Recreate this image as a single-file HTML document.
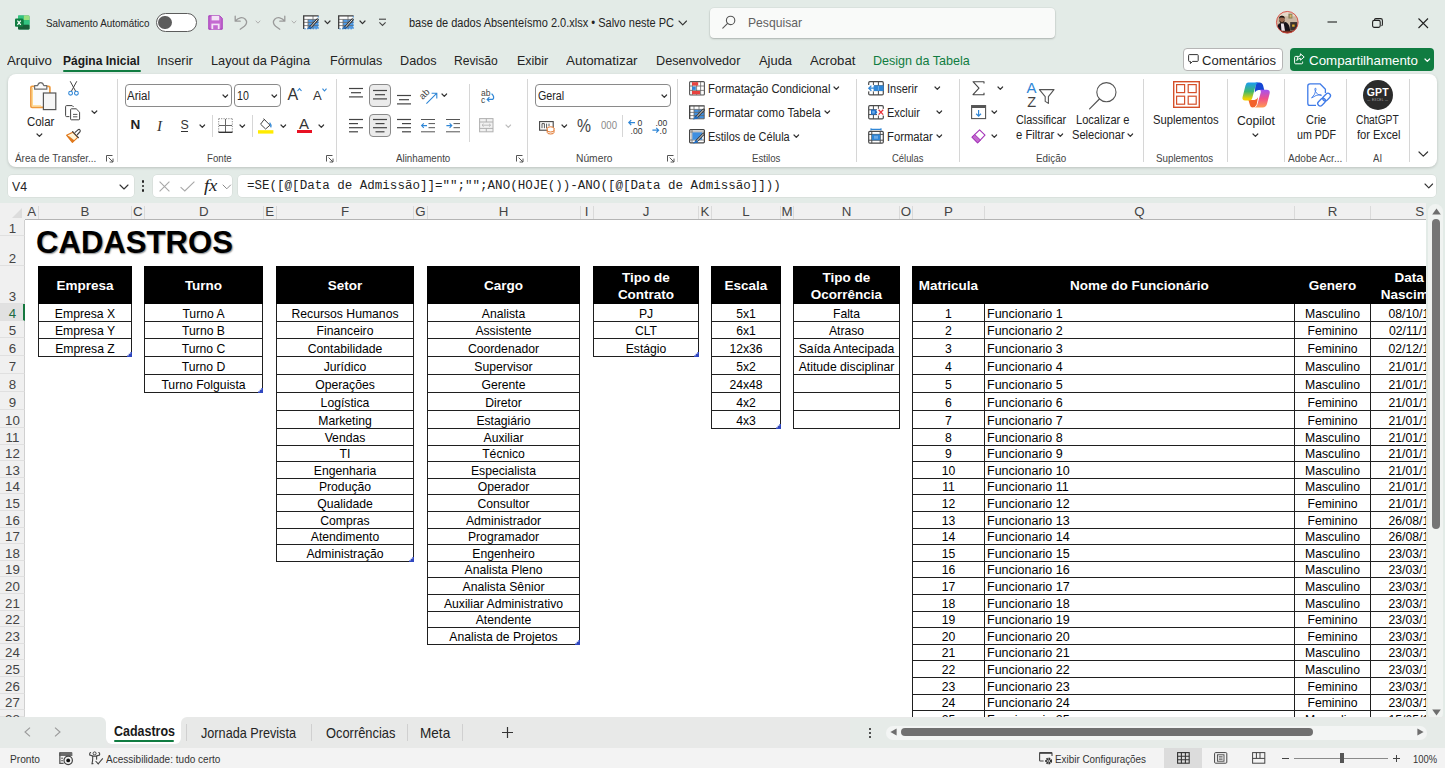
<!DOCTYPE html>
<html lang="pt-BR"><head><meta charset="utf-8"><title>base de dados Absenteísmo 2.0.xlsx - Excel</title>
<style>
html,body{margin:0;padding:0;}
body{width:1445px;height:768px;overflow:hidden;position:relative;background:#e3ebe7;font-family:"Liberation Sans",sans-serif;}
.b{position:absolute;box-sizing:border-box;}
.t{position:absolute;white-space:nowrap;}
svg{overflow:visible;}
.c{position:absolute;white-space:nowrap;font-size:12.2px;line-height:14px;color:#000;text-align:center;}
.h{position:absolute;white-space:nowrap;font-size:13.5px;line-height:17.5px;color:#fff;font-weight:bold;text-align:center;}
</style></head><body>
<div class="b" style="left:0px;top:204px;width:1426px;height:513px;background:#fff;"></div>
<div class="b" style="left:0px;top:203px;width:1426px;height:17px;background:#f0f0f0;"></div>
<div class="b" style="left:25px;top:219px;width:1401px;height:1px;background:#b4b4b4;"></div>
<div class="b" style="left:0px;top:220px;width:25px;height:497px;background:#f0f0f0;border-right:1px solid #d0d0d0;"></div>
<svg class="b" style="left:12px;top:208px;" width="10" height="10" viewBox="0 0 10 10"><path d="M10 0 L10 10 L0 10 Z" fill="#dcdcdc"/></svg>
<div class="b" style="left:38px;top:206px;width:1px;height:13px;background:#dadada;"></div>
<span class="t" style="left:21.7px;width:20px;text-align:center;top:203px;line-height:17px;font-size:13.3px;color:#444;">A</span>
<div class="b" style="left:131px;top:206px;width:1px;height:13px;background:#dadada;"></div>
<span class="t" style="left:74.9px;width:20px;text-align:center;top:203px;line-height:17px;font-size:13.3px;color:#444;">B</span>
<div class="b" style="left:144px;top:206px;width:1px;height:13px;background:#dadada;"></div>
<span class="t" style="left:127.9px;width:20px;text-align:center;top:203px;line-height:17px;font-size:13.3px;color:#444;">C</span>
<div class="b" style="left:263px;top:206px;width:1px;height:13px;background:#dadada;"></div>
<span class="t" style="left:193.7px;width:20px;text-align:center;top:203px;line-height:17px;font-size:13.3px;color:#444;">D</span>
<div class="b" style="left:276px;top:206px;width:1px;height:13px;background:#dadada;"></div>
<span class="t" style="left:259.8px;width:20px;text-align:center;top:203px;line-height:17px;font-size:13.3px;color:#444;">E</span>
<div class="b" style="left:413px;top:206px;width:1px;height:13px;background:#dadada;"></div>
<span class="t" style="left:335.1px;width:20px;text-align:center;top:203px;line-height:17px;font-size:13.3px;color:#444;">F</span>
<div class="b" style="left:427px;top:206px;width:1px;height:13px;background:#dadada;"></div>
<span class="t" style="left:410.3px;width:20px;text-align:center;top:203px;line-height:17px;font-size:13.3px;color:#444;">G</span>
<div class="b" style="left:580px;top:206px;width:1px;height:13px;background:#dadada;"></div>
<span class="t" style="left:493.5px;width:20px;text-align:center;top:203px;line-height:17px;font-size:13.3px;color:#444;">H</span>
<div class="b" style="left:593px;top:206px;width:1px;height:13px;background:#dadada;"></div>
<span class="t" style="left:576.7px;width:20px;text-align:center;top:203px;line-height:17px;font-size:13.3px;color:#444;">I</span>
<div class="b" style="left:698px;top:206px;width:1px;height:13px;background:#dadada;"></div>
<span class="t" style="left:636.0px;width:20px;text-align:center;top:203px;line-height:17px;font-size:13.3px;color:#444;">J</span>
<div class="b" style="left:711px;top:206px;width:1px;height:13px;background:#dadada;"></div>
<span class="t" style="left:695.0px;width:20px;text-align:center;top:203px;line-height:17px;font-size:13.3px;color:#444;">K</span>
<div class="b" style="left:780px;top:206px;width:1px;height:13px;background:#dadada;"></div>
<span class="t" style="left:736.0px;width:20px;text-align:center;top:203px;line-height:17px;font-size:13.3px;color:#444;">L</span>
<div class="b" style="left:793px;top:206px;width:1px;height:13px;background:#dadada;"></div>
<span class="t" style="left:777.1px;width:20px;text-align:center;top:203px;line-height:17px;font-size:13.3px;color:#444;">M</span>
<div class="b" style="left:899px;top:206px;width:1px;height:13px;background:#dadada;"></div>
<span class="t" style="left:836.5px;width:20px;text-align:center;top:203px;line-height:17px;font-size:13.3px;color:#444;">N</span>
<div class="b" style="left:912px;top:206px;width:1px;height:13px;background:#dadada;"></div>
<span class="t" style="left:895.9px;width:20px;text-align:center;top:203px;line-height:17px;font-size:13.3px;color:#444;">O</span>
<div class="b" style="left:984px;top:206px;width:1px;height:13px;background:#dadada;"></div>
<span class="t" style="left:938.4px;width:20px;text-align:center;top:203px;line-height:17px;font-size:13.3px;color:#444;">P</span>
<div class="b" style="left:1294px;top:206px;width:1px;height:13px;background:#dadada;"></div>
<span class="t" style="left:1129.4px;width:20px;text-align:center;top:203px;line-height:17px;font-size:13.3px;color:#444;">Q</span>
<div class="b" style="left:1370px;top:206px;width:1px;height:13px;background:#dadada;"></div>
<span class="t" style="left:1322.5px;width:20px;text-align:center;top:203px;line-height:17px;font-size:13.3px;color:#444;">R</span>
<span class="t" style="left:1409.6px;width:20px;text-align:center;top:203px;line-height:17px;font-size:13.3px;color:#444;">S</span>
<div class="b" style="left:0px;top:220px;width:25px;height:16px;border-bottom:1px solid #e0e0e0;border-right:1px solid #d0d0d0;"></div>
<span class="t" style="left:0;width:25px;text-align:center;top:221.2px;line-height:15px;font-size:13.3px;color:#444;clip-path:inset(0 0 0px 0);">1</span>
<div class="b" style="left:0px;top:236px;width:25px;height:30px;border-bottom:1px solid #e0e0e0;border-right:1px solid #d0d0d0;"></div>
<span class="t" style="left:0;width:25px;text-align:center;top:251.2px;line-height:15px;font-size:13.3px;color:#444;clip-path:inset(0 0 0px 0);">2</span>
<div class="b" style="left:0px;top:266px;width:25px;height:38px;border-bottom:1px solid #e0e0e0;border-right:1px solid #d0d0d0;"></div>
<span class="t" style="left:0;width:25px;text-align:center;top:289.2px;line-height:15px;font-size:13.3px;color:#444;clip-path:inset(0 0 0px 0);">3</span>
<div class="b" style="left:0px;top:304px;width:25px;height:17px;background:#e1e1e1;border-right:2px solid #16783f;border-bottom:1px solid #e0e0e0;"></div>
<span class="t" style="left:0;width:25px;text-align:center;top:306.2px;line-height:15px;font-size:13.3px;color:#1e6b41;clip-path:inset(0 0 0px 0);">4</span>
<div class="b" style="left:0px;top:321px;width:25px;height:17px;border-bottom:1px solid #e0e0e0;border-right:1px solid #d0d0d0;"></div>
<span class="t" style="left:0;width:25px;text-align:center;top:323.2px;line-height:15px;font-size:13.3px;color:#444;clip-path:inset(0 0 0px 0);">5</span>
<div class="b" style="left:0px;top:338px;width:25px;height:18px;border-bottom:1px solid #e0e0e0;border-right:1px solid #d0d0d0;"></div>
<span class="t" style="left:0;width:25px;text-align:center;top:341.2px;line-height:15px;font-size:13.3px;color:#444;clip-path:inset(0 0 0px 0);">6</span>
<div class="b" style="left:0px;top:356px;width:25px;height:18px;border-bottom:1px solid #e0e0e0;border-right:1px solid #d0d0d0;"></div>
<span class="t" style="left:0;width:25px;text-align:center;top:359.2px;line-height:15px;font-size:13.3px;color:#444;clip-path:inset(0 0 0px 0);">7</span>
<div class="b" style="left:0px;top:374px;width:25px;height:18px;border-bottom:1px solid #e0e0e0;border-right:1px solid #d0d0d0;"></div>
<span class="t" style="left:0;width:25px;text-align:center;top:377.2px;line-height:15px;font-size:13.3px;color:#444;clip-path:inset(0 0 0px 0);">8</span>
<div class="b" style="left:0px;top:392px;width:25px;height:18px;border-bottom:1px solid #e0e0e0;border-right:1px solid #d0d0d0;"></div>
<span class="t" style="left:0;width:25px;text-align:center;top:395.2px;line-height:15px;font-size:13.3px;color:#444;clip-path:inset(0 0 0px 0);">9</span>
<div class="b" style="left:0px;top:410px;width:25px;height:18px;border-bottom:1px solid #e0e0e0;border-right:1px solid #d0d0d0;"></div>
<span class="t" style="left:0;width:25px;text-align:center;top:413.2px;line-height:15px;font-size:13.3px;color:#444;clip-path:inset(0 0 0px 0);">10</span>
<div class="b" style="left:0px;top:428px;width:25px;height:17px;border-bottom:1px solid #e0e0e0;border-right:1px solid #d0d0d0;"></div>
<span class="t" style="left:0;width:25px;text-align:center;top:430.2px;line-height:15px;font-size:13.3px;color:#444;clip-path:inset(0 0 0px 0);">11</span>
<div class="b" style="left:0px;top:445px;width:25px;height:16px;border-bottom:1px solid #e0e0e0;border-right:1px solid #d0d0d0;"></div>
<span class="t" style="left:0;width:25px;text-align:center;top:446.2px;line-height:15px;font-size:13.3px;color:#444;clip-path:inset(0 0 0px 0);">12</span>
<div class="b" style="left:0px;top:461px;width:25px;height:17px;border-bottom:1px solid #e0e0e0;border-right:1px solid #d0d0d0;"></div>
<span class="t" style="left:0;width:25px;text-align:center;top:463.2px;line-height:15px;font-size:13.3px;color:#444;clip-path:inset(0 0 0px 0);">13</span>
<div class="b" style="left:0px;top:478px;width:25px;height:16px;border-bottom:1px solid #e0e0e0;border-right:1px solid #d0d0d0;"></div>
<span class="t" style="left:0;width:25px;text-align:center;top:479.2px;line-height:15px;font-size:13.3px;color:#444;clip-path:inset(0 0 0px 0);">14</span>
<div class="b" style="left:0px;top:494px;width:25px;height:17px;border-bottom:1px solid #e0e0e0;border-right:1px solid #d0d0d0;"></div>
<span class="t" style="left:0;width:25px;text-align:center;top:496.2px;line-height:15px;font-size:13.3px;color:#444;clip-path:inset(0 0 0px 0);">15</span>
<div class="b" style="left:0px;top:511px;width:25px;height:17px;border-bottom:1px solid #e0e0e0;border-right:1px solid #d0d0d0;"></div>
<span class="t" style="left:0;width:25px;text-align:center;top:513.2px;line-height:15px;font-size:13.3px;color:#444;clip-path:inset(0 0 0px 0);">16</span>
<div class="b" style="left:0px;top:528px;width:25px;height:16px;border-bottom:1px solid #e0e0e0;border-right:1px solid #d0d0d0;"></div>
<span class="t" style="left:0;width:25px;text-align:center;top:529.2px;line-height:15px;font-size:13.3px;color:#444;clip-path:inset(0 0 0px 0);">17</span>
<div class="b" style="left:0px;top:544px;width:25px;height:17px;border-bottom:1px solid #e0e0e0;border-right:1px solid #d0d0d0;"></div>
<span class="t" style="left:0;width:25px;text-align:center;top:546.2px;line-height:15px;font-size:13.3px;color:#444;clip-path:inset(0 0 0px 0);">18</span>
<div class="b" style="left:0px;top:561px;width:25px;height:16px;border-bottom:1px solid #e0e0e0;border-right:1px solid #d0d0d0;"></div>
<span class="t" style="left:0;width:25px;text-align:center;top:562.2px;line-height:15px;font-size:13.3px;color:#444;clip-path:inset(0 0 0px 0);">19</span>
<div class="b" style="left:0px;top:577px;width:25px;height:17px;border-bottom:1px solid #e0e0e0;border-right:1px solid #d0d0d0;"></div>
<span class="t" style="left:0;width:25px;text-align:center;top:579.2px;line-height:15px;font-size:13.3px;color:#444;clip-path:inset(0 0 0px 0);">20</span>
<div class="b" style="left:0px;top:594px;width:25px;height:17px;border-bottom:1px solid #e0e0e0;border-right:1px solid #d0d0d0;"></div>
<span class="t" style="left:0;width:25px;text-align:center;top:596.2px;line-height:15px;font-size:13.3px;color:#444;clip-path:inset(0 0 0px 0);">21</span>
<div class="b" style="left:0px;top:611px;width:25px;height:16px;border-bottom:1px solid #e0e0e0;border-right:1px solid #d0d0d0;"></div>
<span class="t" style="left:0;width:25px;text-align:center;top:612.2px;line-height:15px;font-size:13.3px;color:#444;clip-path:inset(0 0 0px 0);">22</span>
<div class="b" style="left:0px;top:627px;width:25px;height:17px;border-bottom:1px solid #e0e0e0;border-right:1px solid #d0d0d0;"></div>
<span class="t" style="left:0;width:25px;text-align:center;top:629.2px;line-height:15px;font-size:13.3px;color:#444;clip-path:inset(0 0 0px 0);">23</span>
<div class="b" style="left:0px;top:644px;width:25px;height:16px;border-bottom:1px solid #e0e0e0;border-right:1px solid #d0d0d0;"></div>
<span class="t" style="left:0;width:25px;text-align:center;top:645.2px;line-height:15px;font-size:13.3px;color:#444;clip-path:inset(0 0 0px 0);">24</span>
<div class="b" style="left:0px;top:660px;width:25px;height:17px;border-bottom:1px solid #e0e0e0;border-right:1px solid #d0d0d0;"></div>
<span class="t" style="left:0;width:25px;text-align:center;top:662.2px;line-height:15px;font-size:13.3px;color:#444;clip-path:inset(0 0 0px 0);">25</span>
<div class="b" style="left:0px;top:677px;width:25px;height:17px;border-bottom:1px solid #e0e0e0;border-right:1px solid #d0d0d0;"></div>
<span class="t" style="left:0;width:25px;text-align:center;top:679.2px;line-height:15px;font-size:13.3px;color:#444;clip-path:inset(0 0 0px 0);">26</span>
<div class="b" style="left:0px;top:694px;width:25px;height:16px;border-bottom:1px solid #e0e0e0;border-right:1px solid #d0d0d0;"></div>
<span class="t" style="left:0;width:25px;text-align:center;top:695.2px;line-height:15px;font-size:13.3px;color:#444;clip-path:inset(0 0 0px 0);">27</span>
<div class="b" style="left:0px;top:710px;width:25px;height:7px;border-bottom:1px solid #e0e0e0;border-right:1px solid #d0d0d0;"></div>
<span class="t" style="left:0;width:25px;text-align:center;top:712.2px;line-height:15px;font-size:13.3px;color:#444;clip-path:inset(0 0 9px 0);">28</span>
<span class="t" style="left:36.0px;top:223.6px;font-size:32px;line-height:36px;font-weight:bold;color:#000;transform-origin:0 50%;transform:scaleX(.972);text-shadow:1px 1px 1.5px rgba(0,0,0,.45);">CADASTROS</span>
<div class="b" style="left:38px;top:266px;width:94px;height:38px;background:#000;"></div>
<span class="h" style="left:38px;width:94px;top:277.25px;">Empresa</span>
<div class="b" style="left:38px;top:304px;width:1px;height:53px;background:#1f1f1f;"></div>
<div class="b" style="left:131px;top:304px;width:1px;height:53px;background:#1f1f1f;"></div>
<div class="b" style="left:38px;top:321px;width:94px;height:1px;background:#1f1f1f;"></div>
<span class="c" style="left:38px;width:94px;top:306.6px;">Empresa X</span>
<div class="b" style="left:38px;top:338px;width:94px;height:1px;background:#1f1f1f;"></div>
<span class="c" style="left:38px;width:94px;top:323.6px;">Empresa Y</span>
<div class="b" style="left:38px;top:356px;width:94px;height:1px;background:#1f1f1f;"></div>
<span class="c" style="left:38px;width:94px;top:341.6px;">Empresa Z</span>
<svg class="b" style="left:127px;top:352px;" width="5" height="5" viewBox="0 0 5 5"><path d="M3.4 0 H5 V5 H0 V3.4 H1.7 V1.7 H3.4 Z" fill="#3048c0"/></svg>
<div class="b" style="left:144px;top:266px;width:119px;height:38px;background:#000;"></div>
<span class="h" style="left:144px;width:119px;top:277.25px;">Turno</span>
<div class="b" style="left:144px;top:304px;width:1px;height:89px;background:#1f1f1f;"></div>
<div class="b" style="left:262px;top:304px;width:1px;height:89px;background:#1f1f1f;"></div>
<div class="b" style="left:144px;top:321px;width:119px;height:1px;background:#1f1f1f;"></div>
<span class="c" style="left:144px;width:119px;top:306.6px;">Turno A</span>
<div class="b" style="left:144px;top:338px;width:119px;height:1px;background:#1f1f1f;"></div>
<span class="c" style="left:144px;width:119px;top:323.6px;">Turno B</span>
<div class="b" style="left:144px;top:356px;width:119px;height:1px;background:#1f1f1f;"></div>
<span class="c" style="left:144px;width:119px;top:341.6px;">Turno C</span>
<div class="b" style="left:144px;top:374px;width:119px;height:1px;background:#1f1f1f;"></div>
<span class="c" style="left:144px;width:119px;top:359.6px;">Turno D</span>
<div class="b" style="left:144px;top:392px;width:119px;height:1px;background:#1f1f1f;"></div>
<span class="c" style="left:144px;width:119px;top:377.6px;">Turno Folguista</span>
<svg class="b" style="left:258px;top:388px;" width="5" height="5" viewBox="0 0 5 5"><path d="M3.4 0 H5 V5 H0 V3.4 H1.7 V1.7 H3.4 Z" fill="#3048c0"/></svg>
<div class="b" style="left:276px;top:266px;width:138px;height:38px;background:#000;"></div>
<span class="h" style="left:276px;width:138px;top:277.25px;">Setor</span>
<div class="b" style="left:276px;top:304px;width:1px;height:258px;background:#1f1f1f;"></div>
<div class="b" style="left:413px;top:304px;width:1px;height:258px;background:#1f1f1f;"></div>
<div class="b" style="left:276px;top:321px;width:138px;height:1px;background:#1f1f1f;"></div>
<span class="c" style="left:276px;width:138px;top:306.6px;">Recursos Humanos</span>
<div class="b" style="left:276px;top:338px;width:138px;height:1px;background:#1f1f1f;"></div>
<span class="c" style="left:276px;width:138px;top:323.6px;">Financeiro</span>
<div class="b" style="left:276px;top:356px;width:138px;height:1px;background:#1f1f1f;"></div>
<span class="c" style="left:276px;width:138px;top:341.6px;">Contabilidade</span>
<div class="b" style="left:276px;top:374px;width:138px;height:1px;background:#1f1f1f;"></div>
<span class="c" style="left:276px;width:138px;top:359.6px;">Jurídico</span>
<div class="b" style="left:276px;top:392px;width:138px;height:1px;background:#1f1f1f;"></div>
<span class="c" style="left:276px;width:138px;top:377.6px;">Operações</span>
<div class="b" style="left:276px;top:410px;width:138px;height:1px;background:#1f1f1f;"></div>
<span class="c" style="left:276px;width:138px;top:395.6px;">Logística</span>
<div class="b" style="left:276px;top:428px;width:138px;height:1px;background:#1f1f1f;"></div>
<span class="c" style="left:276px;width:138px;top:413.6px;">Marketing</span>
<div class="b" style="left:276px;top:445px;width:138px;height:1px;background:#1f1f1f;"></div>
<span class="c" style="left:276px;width:138px;top:430.6px;">Vendas</span>
<div class="b" style="left:276px;top:461px;width:138px;height:1px;background:#1f1f1f;"></div>
<span class="c" style="left:276px;width:138px;top:446.6px;">TI</span>
<div class="b" style="left:276px;top:478px;width:138px;height:1px;background:#1f1f1f;"></div>
<span class="c" style="left:276px;width:138px;top:463.6px;">Engenharia</span>
<div class="b" style="left:276px;top:494px;width:138px;height:1px;background:#1f1f1f;"></div>
<span class="c" style="left:276px;width:138px;top:479.6px;">Produção</span>
<div class="b" style="left:276px;top:511px;width:138px;height:1px;background:#1f1f1f;"></div>
<span class="c" style="left:276px;width:138px;top:496.6px;">Qualidade</span>
<div class="b" style="left:276px;top:528px;width:138px;height:1px;background:#1f1f1f;"></div>
<span class="c" style="left:276px;width:138px;top:513.6px;">Compras</span>
<div class="b" style="left:276px;top:544px;width:138px;height:1px;background:#1f1f1f;"></div>
<span class="c" style="left:276px;width:138px;top:529.6px;">Atendimento</span>
<div class="b" style="left:276px;top:561px;width:138px;height:1px;background:#1f1f1f;"></div>
<span class="c" style="left:276px;width:138px;top:546.6px;">Administração</span>
<svg class="b" style="left:409px;top:557px;" width="5" height="5" viewBox="0 0 5 5"><path d="M3.4 0 H5 V5 H0 V3.4 H1.7 V1.7 H3.4 Z" fill="#3048c0"/></svg>
<div class="b" style="left:427px;top:266px;width:153px;height:38px;background:#000;"></div>
<span class="h" style="left:427px;width:153px;top:277.25px;">Cargo</span>
<div class="b" style="left:427px;top:304px;width:1px;height:341px;background:#1f1f1f;"></div>
<div class="b" style="left:579px;top:304px;width:1px;height:341px;background:#1f1f1f;"></div>
<div class="b" style="left:427px;top:321px;width:153px;height:1px;background:#1f1f1f;"></div>
<span class="c" style="left:427px;width:153px;top:306.6px;">Analista</span>
<div class="b" style="left:427px;top:338px;width:153px;height:1px;background:#1f1f1f;"></div>
<span class="c" style="left:427px;width:153px;top:323.6px;">Assistente</span>
<div class="b" style="left:427px;top:356px;width:153px;height:1px;background:#1f1f1f;"></div>
<span class="c" style="left:427px;width:153px;top:341.6px;">Coordenador</span>
<div class="b" style="left:427px;top:374px;width:153px;height:1px;background:#1f1f1f;"></div>
<span class="c" style="left:427px;width:153px;top:359.6px;">Supervisor</span>
<div class="b" style="left:427px;top:392px;width:153px;height:1px;background:#1f1f1f;"></div>
<span class="c" style="left:427px;width:153px;top:377.6px;">Gerente</span>
<div class="b" style="left:427px;top:410px;width:153px;height:1px;background:#1f1f1f;"></div>
<span class="c" style="left:427px;width:153px;top:395.6px;">Diretor</span>
<div class="b" style="left:427px;top:428px;width:153px;height:1px;background:#1f1f1f;"></div>
<span class="c" style="left:427px;width:153px;top:413.6px;">Estagiário</span>
<div class="b" style="left:427px;top:445px;width:153px;height:1px;background:#1f1f1f;"></div>
<span class="c" style="left:427px;width:153px;top:430.6px;">Auxiliar</span>
<div class="b" style="left:427px;top:461px;width:153px;height:1px;background:#1f1f1f;"></div>
<span class="c" style="left:427px;width:153px;top:446.6px;">Técnico</span>
<div class="b" style="left:427px;top:478px;width:153px;height:1px;background:#1f1f1f;"></div>
<span class="c" style="left:427px;width:153px;top:463.6px;">Especialista</span>
<div class="b" style="left:427px;top:494px;width:153px;height:1px;background:#1f1f1f;"></div>
<span class="c" style="left:427px;width:153px;top:479.6px;">Operador</span>
<div class="b" style="left:427px;top:511px;width:153px;height:1px;background:#1f1f1f;"></div>
<span class="c" style="left:427px;width:153px;top:496.6px;">Consultor</span>
<div class="b" style="left:427px;top:528px;width:153px;height:1px;background:#1f1f1f;"></div>
<span class="c" style="left:427px;width:153px;top:513.6px;">Administrador</span>
<div class="b" style="left:427px;top:544px;width:153px;height:1px;background:#1f1f1f;"></div>
<span class="c" style="left:427px;width:153px;top:529.6px;">Programador</span>
<div class="b" style="left:427px;top:561px;width:153px;height:1px;background:#1f1f1f;"></div>
<span class="c" style="left:427px;width:153px;top:546.6px;">Engenheiro</span>
<div class="b" style="left:427px;top:577px;width:153px;height:1px;background:#1f1f1f;"></div>
<span class="c" style="left:427px;width:153px;top:562.6px;">Analista Pleno</span>
<div class="b" style="left:427px;top:594px;width:153px;height:1px;background:#1f1f1f;"></div>
<span class="c" style="left:427px;width:153px;top:579.6px;">Analista Sênior</span>
<div class="b" style="left:427px;top:611px;width:153px;height:1px;background:#1f1f1f;"></div>
<span class="c" style="left:427px;width:153px;top:596.6px;">Auxiliar Administrativo</span>
<div class="b" style="left:427px;top:627px;width:153px;height:1px;background:#1f1f1f;"></div>
<span class="c" style="left:427px;width:153px;top:612.6px;">Atendente</span>
<div class="b" style="left:427px;top:644px;width:153px;height:1px;background:#1f1f1f;"></div>
<span class="c" style="left:427px;width:153px;top:629.6px;">Analista de Projetos</span>
<svg class="b" style="left:575px;top:640px;" width="5" height="5" viewBox="0 0 5 5"><path d="M3.4 0 H5 V5 H0 V3.4 H1.7 V1.7 H3.4 Z" fill="#3048c0"/></svg>
<div class="b" style="left:593px;top:266px;width:106px;height:38px;background:#000;"></div>
<span class="h" style="left:593px;width:106px;top:268.75px;">Tipo de</span>
<span class="h" style="left:593px;width:106px;top:286.35px;">Contrato</span>
<div class="b" style="left:593px;top:304px;width:1px;height:53px;background:#1f1f1f;"></div>
<div class="b" style="left:698px;top:304px;width:1px;height:53px;background:#1f1f1f;"></div>
<div class="b" style="left:593px;top:321px;width:106px;height:1px;background:#1f1f1f;"></div>
<span class="c" style="left:593px;width:106px;top:306.6px;">PJ</span>
<div class="b" style="left:593px;top:338px;width:106px;height:1px;background:#1f1f1f;"></div>
<span class="c" style="left:593px;width:106px;top:323.6px;">CLT</span>
<div class="b" style="left:593px;top:356px;width:106px;height:1px;background:#1f1f1f;"></div>
<span class="c" style="left:593px;width:106px;top:341.6px;">Estágio</span>
<svg class="b" style="left:694px;top:352px;" width="5" height="5" viewBox="0 0 5 5"><path d="M3.4 0 H5 V5 H0 V3.4 H1.7 V1.7 H3.4 Z" fill="#3048c0"/></svg>
<div class="b" style="left:711px;top:266px;width:70px;height:38px;background:#000;"></div>
<span class="h" style="left:711px;width:70px;top:277.25px;">Escala</span>
<div class="b" style="left:711px;top:304px;width:1px;height:125px;background:#1f1f1f;"></div>
<div class="b" style="left:780px;top:304px;width:1px;height:125px;background:#1f1f1f;"></div>
<div class="b" style="left:711px;top:321px;width:70px;height:1px;background:#1f1f1f;"></div>
<span class="c" style="left:711px;width:70px;top:306.6px;">5x1</span>
<div class="b" style="left:711px;top:338px;width:70px;height:1px;background:#1f1f1f;"></div>
<span class="c" style="left:711px;width:70px;top:323.6px;">6x1</span>
<div class="b" style="left:711px;top:356px;width:70px;height:1px;background:#1f1f1f;"></div>
<span class="c" style="left:711px;width:70px;top:341.6px;">12x36</span>
<div class="b" style="left:711px;top:374px;width:70px;height:1px;background:#1f1f1f;"></div>
<span class="c" style="left:711px;width:70px;top:359.6px;">5x2</span>
<div class="b" style="left:711px;top:392px;width:70px;height:1px;background:#1f1f1f;"></div>
<span class="c" style="left:711px;width:70px;top:377.6px;">24x48</span>
<div class="b" style="left:711px;top:410px;width:70px;height:1px;background:#1f1f1f;"></div>
<span class="c" style="left:711px;width:70px;top:395.6px;">4x2</span>
<div class="b" style="left:711px;top:428px;width:70px;height:1px;background:#1f1f1f;"></div>
<span class="c" style="left:711px;width:70px;top:413.6px;">4x3</span>
<svg class="b" style="left:776px;top:424px;" width="5" height="5" viewBox="0 0 5 5"><path d="M3.4 0 H5 V5 H0 V3.4 H1.7 V1.7 H3.4 Z" fill="#3048c0"/></svg>
<div class="b" style="left:793px;top:266px;width:107px;height:38px;background:#000;"></div>
<span class="h" style="left:793px;width:107px;top:268.75px;">Tipo de</span>
<span class="h" style="left:793px;width:107px;top:286.35px;">Ocorrência</span>
<div class="b" style="left:793px;top:304px;width:1px;height:125px;background:#1f1f1f;"></div>
<div class="b" style="left:899px;top:304px;width:1px;height:125px;background:#1f1f1f;"></div>
<div class="b" style="left:793px;top:321px;width:107px;height:1px;background:#1f1f1f;"></div>
<span class="c" style="left:793px;width:107px;top:306.6px;">Falta</span>
<div class="b" style="left:793px;top:338px;width:107px;height:1px;background:#1f1f1f;"></div>
<span class="c" style="left:793px;width:107px;top:323.6px;">Atraso</span>
<div class="b" style="left:793px;top:356px;width:107px;height:1px;background:#1f1f1f;"></div>
<span class="c" style="left:793px;width:107px;top:341.6px;">Saída Antecipada</span>
<div class="b" style="left:793px;top:374px;width:107px;height:1px;background:#1f1f1f;"></div>
<span class="c" style="left:793px;width:107px;top:359.6px;">Atitude disciplinar</span>
<div class="b" style="left:793px;top:392px;width:107px;height:1px;background:#1f1f1f;"></div>
<div class="b" style="left:793px;top:410px;width:107px;height:1px;background:#1f1f1f;"></div>
<div class="b" style="left:793px;top:428px;width:107px;height:1px;background:#1f1f1f;"></div>
<div class="b" style="left:900px;top:220px;width:526px;height:497px;overflow:hidden;">
<div class="b" style="left:12px;top:46px;width:556px;height:38px;background:#000;"></div>
<span class="h" style="left:12px;width:73px;top:57.25px;">Matricula</span>
<span class="h" style="left:84px;width:311px;top:57.25px;">Nome do Funcionário</span>
<span class="h" style="left:394px;width:77px;top:57.25px;">Genero</span>
<span class="h" style="left:470px;width:98px;top:48.75px;">Data de</span>
<span class="h" style="left:470px;width:98px;top:66.35000000000002px;">Nascimento</span>
<div class="b" style="left:12px;top:84px;width:1px;height:433px;background:#1f1f1f;"></div>
<div class="b" style="left:84px;top:84px;width:1px;height:433px;background:#1f1f1f;"></div>
<div class="b" style="left:394px;top:84px;width:1px;height:433px;background:#1f1f1f;"></div>
<div class="b" style="left:470px;top:84px;width:1px;height:433px;background:#1f1f1f;"></div>
<div class="b" style="left:12px;top:101px;width:555px;height:1px;background:#1f1f1f;"></div>
<span class="c" style="left:12px;width:73px;top:86.60000000000002px;">1</span>
<span class="c" style="left:87px;text-align:left;font-size:12.5px;top:86.90000000000002px;">Funcionario 1</span>
<span class="c" style="left:394px;width:77px;top:86.60000000000002px;">Masculino</span>
<span class="c" style="left:470px;width:98px;top:86.60000000000002px;">08/10/1990</span>
<div class="b" style="left:12px;top:118px;width:555px;height:1px;background:#1f1f1f;"></div>
<span class="c" style="left:12px;width:73px;top:103.60000000000002px;">2</span>
<span class="c" style="left:87px;text-align:left;font-size:12.5px;top:103.90000000000002px;">Funcionario 2</span>
<span class="c" style="left:394px;width:77px;top:103.60000000000002px;">Feminino</span>
<span class="c" style="left:470px;width:98px;top:103.60000000000002px;">02/11/1991</span>
<div class="b" style="left:12px;top:136px;width:555px;height:1px;background:#1f1f1f;"></div>
<span class="c" style="left:12px;width:73px;top:121.60000000000002px;">3</span>
<span class="c" style="left:87px;text-align:left;font-size:12.5px;top:121.90000000000002px;">Funcionario 3</span>
<span class="c" style="left:394px;width:77px;top:121.60000000000002px;">Feminino</span>
<span class="c" style="left:470px;width:98px;top:121.60000000000002px;">02/12/1989</span>
<div class="b" style="left:12px;top:154px;width:555px;height:1px;background:#1f1f1f;"></div>
<span class="c" style="left:12px;width:73px;top:139.60000000000002px;">4</span>
<span class="c" style="left:87px;text-align:left;font-size:12.5px;top:139.90000000000003px;">Funcionario 4</span>
<span class="c" style="left:394px;width:77px;top:139.60000000000002px;">Masculino</span>
<span class="c" style="left:470px;width:98px;top:139.60000000000002px;">21/01/1992</span>
<div class="b" style="left:12px;top:172px;width:555px;height:1px;background:#1f1f1f;"></div>
<span class="c" style="left:12px;width:73px;top:157.60000000000002px;">5</span>
<span class="c" style="left:87px;text-align:left;font-size:12.5px;top:157.90000000000003px;">Funcionario 5</span>
<span class="c" style="left:394px;width:77px;top:157.60000000000002px;">Masculino</span>
<span class="c" style="left:470px;width:98px;top:157.60000000000002px;">21/01/1992</span>
<div class="b" style="left:12px;top:190px;width:555px;height:1px;background:#1f1f1f;"></div>
<span class="c" style="left:12px;width:73px;top:175.60000000000002px;">6</span>
<span class="c" style="left:87px;text-align:left;font-size:12.5px;top:175.90000000000003px;">Funcionario 6</span>
<span class="c" style="left:394px;width:77px;top:175.60000000000002px;">Feminino</span>
<span class="c" style="left:470px;width:98px;top:175.60000000000002px;">21/01/1992</span>
<div class="b" style="left:12px;top:208px;width:555px;height:1px;background:#1f1f1f;"></div>
<span class="c" style="left:12px;width:73px;top:193.60000000000002px;">7</span>
<span class="c" style="left:87px;text-align:left;font-size:12.5px;top:193.90000000000003px;">Funcionario 7</span>
<span class="c" style="left:394px;width:77px;top:193.60000000000002px;">Feminino</span>
<span class="c" style="left:470px;width:98px;top:193.60000000000002px;">21/01/1992</span>
<div class="b" style="left:12px;top:225px;width:555px;height:1px;background:#1f1f1f;"></div>
<span class="c" style="left:12px;width:73px;top:210.60000000000002px;">8</span>
<span class="c" style="left:87px;text-align:left;font-size:12.5px;top:210.90000000000003px;">Funcionario 8</span>
<span class="c" style="left:394px;width:77px;top:210.60000000000002px;">Masculino</span>
<span class="c" style="left:470px;width:98px;top:210.60000000000002px;">21/01/1992</span>
<div class="b" style="left:12px;top:241px;width:555px;height:1px;background:#1f1f1f;"></div>
<span class="c" style="left:12px;width:73px;top:226.60000000000002px;">9</span>
<span class="c" style="left:87px;text-align:left;font-size:12.5px;top:226.90000000000003px;">Funcionario 9</span>
<span class="c" style="left:394px;width:77px;top:226.60000000000002px;">Masculino</span>
<span class="c" style="left:470px;width:98px;top:226.60000000000002px;">21/01/1992</span>
<div class="b" style="left:12px;top:258px;width:555px;height:1px;background:#1f1f1f;"></div>
<span class="c" style="left:12px;width:73px;top:243.60000000000002px;">10</span>
<span class="c" style="left:87px;text-align:left;font-size:12.5px;top:243.90000000000003px;">Funcionario 10</span>
<span class="c" style="left:394px;width:77px;top:243.60000000000002px;">Masculino</span>
<span class="c" style="left:470px;width:98px;top:243.60000000000002px;">21/01/1992</span>
<div class="b" style="left:12px;top:274px;width:555px;height:1px;background:#1f1f1f;"></div>
<span class="c" style="left:12px;width:73px;top:259.6px;">11</span>
<span class="c" style="left:87px;text-align:left;font-size:12.5px;top:259.90000000000003px;">Funcionario 11</span>
<span class="c" style="left:394px;width:77px;top:259.6px;">Masculino</span>
<span class="c" style="left:470px;width:98px;top:259.6px;">21/01/1992</span>
<div class="b" style="left:12px;top:291px;width:555px;height:1px;background:#1f1f1f;"></div>
<span class="c" style="left:12px;width:73px;top:276.6px;">12</span>
<span class="c" style="left:87px;text-align:left;font-size:12.5px;top:276.90000000000003px;">Funcionario 12</span>
<span class="c" style="left:394px;width:77px;top:276.6px;">Feminino</span>
<span class="c" style="left:470px;width:98px;top:276.6px;">21/01/1992</span>
<div class="b" style="left:12px;top:308px;width:555px;height:1px;background:#1f1f1f;"></div>
<span class="c" style="left:12px;width:73px;top:293.6px;">13</span>
<span class="c" style="left:87px;text-align:left;font-size:12.5px;top:293.90000000000003px;">Funcionario 13</span>
<span class="c" style="left:394px;width:77px;top:293.6px;">Feminino</span>
<span class="c" style="left:470px;width:98px;top:293.6px;">26/08/1988</span>
<div class="b" style="left:12px;top:324px;width:555px;height:1px;background:#1f1f1f;"></div>
<span class="c" style="left:12px;width:73px;top:309.6px;">14</span>
<span class="c" style="left:87px;text-align:left;font-size:12.5px;top:309.90000000000003px;">Funcionario 14</span>
<span class="c" style="left:394px;width:77px;top:309.6px;">Masculino</span>
<span class="c" style="left:470px;width:98px;top:309.6px;">26/08/1988</span>
<div class="b" style="left:12px;top:341px;width:555px;height:1px;background:#1f1f1f;"></div>
<span class="c" style="left:12px;width:73px;top:326.6px;">15</span>
<span class="c" style="left:87px;text-align:left;font-size:12.5px;top:326.90000000000003px;">Funcionario 15</span>
<span class="c" style="left:394px;width:77px;top:326.6px;">Masculino</span>
<span class="c" style="left:470px;width:98px;top:326.6px;">23/03/1993</span>
<div class="b" style="left:12px;top:357px;width:555px;height:1px;background:#1f1f1f;"></div>
<span class="c" style="left:12px;width:73px;top:342.6px;">16</span>
<span class="c" style="left:87px;text-align:left;font-size:12.5px;top:342.90000000000003px;">Funcionario 16</span>
<span class="c" style="left:394px;width:77px;top:342.6px;">Masculino</span>
<span class="c" style="left:470px;width:98px;top:342.6px;">23/03/1993</span>
<div class="b" style="left:12px;top:374px;width:555px;height:1px;background:#1f1f1f;"></div>
<span class="c" style="left:12px;width:73px;top:359.6px;">17</span>
<span class="c" style="left:87px;text-align:left;font-size:12.5px;top:359.90000000000003px;">Funcionario 17</span>
<span class="c" style="left:394px;width:77px;top:359.6px;">Masculino</span>
<span class="c" style="left:470px;width:98px;top:359.6px;">23/03/1993</span>
<div class="b" style="left:12px;top:391px;width:555px;height:1px;background:#1f1f1f;"></div>
<span class="c" style="left:12px;width:73px;top:376.6px;">18</span>
<span class="c" style="left:87px;text-align:left;font-size:12.5px;top:376.90000000000003px;">Funcionario 18</span>
<span class="c" style="left:394px;width:77px;top:376.6px;">Masculino</span>
<span class="c" style="left:470px;width:98px;top:376.6px;">23/03/1993</span>
<div class="b" style="left:12px;top:407px;width:555px;height:1px;background:#1f1f1f;"></div>
<span class="c" style="left:12px;width:73px;top:392.6px;">19</span>
<span class="c" style="left:87px;text-align:left;font-size:12.5px;top:392.90000000000003px;">Funcionario 19</span>
<span class="c" style="left:394px;width:77px;top:392.6px;">Feminino</span>
<span class="c" style="left:470px;width:98px;top:392.6px;">23/03/1993</span>
<div class="b" style="left:12px;top:424px;width:555px;height:1px;background:#1f1f1f;"></div>
<span class="c" style="left:12px;width:73px;top:409.6px;">20</span>
<span class="c" style="left:87px;text-align:left;font-size:12.5px;top:409.90000000000003px;">Funcionario 20</span>
<span class="c" style="left:394px;width:77px;top:409.6px;">Feminino</span>
<span class="c" style="left:470px;width:98px;top:409.6px;">23/03/1993</span>
<div class="b" style="left:12px;top:440px;width:555px;height:1px;background:#1f1f1f;"></div>
<span class="c" style="left:12px;width:73px;top:425.6px;">21</span>
<span class="c" style="left:87px;text-align:left;font-size:12.5px;top:425.90000000000003px;">Funcionario 21</span>
<span class="c" style="left:394px;width:77px;top:425.6px;">Masculino</span>
<span class="c" style="left:470px;width:98px;top:425.6px;">23/03/1993</span>
<div class="b" style="left:12px;top:457px;width:555px;height:1px;background:#1f1f1f;"></div>
<span class="c" style="left:12px;width:73px;top:442.6px;">22</span>
<span class="c" style="left:87px;text-align:left;font-size:12.5px;top:442.90000000000003px;">Funcionario 22</span>
<span class="c" style="left:394px;width:77px;top:442.6px;">Masculino</span>
<span class="c" style="left:470px;width:98px;top:442.6px;">23/03/1993</span>
<div class="b" style="left:12px;top:474px;width:555px;height:1px;background:#1f1f1f;"></div>
<span class="c" style="left:12px;width:73px;top:459.6px;">23</span>
<span class="c" style="left:87px;text-align:left;font-size:12.5px;top:459.90000000000003px;">Funcionario 23</span>
<span class="c" style="left:394px;width:77px;top:459.6px;">Feminino</span>
<span class="c" style="left:470px;width:98px;top:459.6px;">23/03/1993</span>
<div class="b" style="left:12px;top:490px;width:555px;height:1px;background:#1f1f1f;"></div>
<span class="c" style="left:12px;width:73px;top:475.6px;">24</span>
<span class="c" style="left:87px;text-align:left;font-size:12.5px;top:475.90000000000003px;">Funcionario 24</span>
<span class="c" style="left:394px;width:77px;top:475.6px;">Feminino</span>
<span class="c" style="left:470px;width:98px;top:475.6px;">23/03/1993</span>
<div class="b" style="left:12px;top:507px;width:555px;height:1px;background:#1f1f1f;"></div>
<span class="c" style="left:12px;width:73px;top:492.6px;">25</span>
<span class="c" style="left:87px;text-align:left;font-size:12.5px;top:492.90000000000003px;">Funcionario 25</span>
<span class="c" style="left:394px;width:77px;top:492.6px;">Masculino</span>
<span class="c" style="left:470px;width:98px;top:492.6px;">15/05/1990</span>
</div>
<div class="b" style="left:1426px;top:203px;width:19px;height:516px;background:#e3ebe7;"></div>
<div class="b" style="left:1428.4px;top:204px;width:15px;height:517px;background:#f0f3f1;border-radius:7.5px;"></div>
<svg class="b" style="left:1431.5px;top:208px;" width="9" height="7" viewBox="0 0 9 7"><path d="M4.5 0.5 L8.8 6.5 L0.2 6.5 Z" fill="#6e6e6e"/></svg>
<div class="b" style="left:1432px;top:219px;width:8px;height:310px;background:#757575;border-radius:4px;"></div>
<svg class="b" style="left:1431.5px;top:709px;" width="9" height="7" viewBox="0 0 9 7"><path d="M4.5 6.5 L8.8 0.5 L0.2 0.5 Z" fill="#6e6e6e"/></svg>
<svg class="b" style="left:15px;top:15px;" width="15" height="15" viewBox="0 0 15 15"><rect x="3" y="0.5" width="11.5" height="14" rx="1.2" fill="#21a366"/>
<rect x="3" y="0.5" width="5.8" height="4.7" fill="#33c481"/><rect x="8.8" y="0.5" width="5.7" height="4.7" rx="1" fill="#9be07f"/>
<rect x="3" y="5.2" width="5.8" height="4.6" fill="#107c41"/><rect x="8.8" y="5.2" width="5.7" height="4.6" fill="#33c481"/>
<rect x="3" y="9.8" width="11.5" height="4.7" rx="1" fill="#185c37"/>
<rect x="0" y="3.6" width="8.2" height="8.2" rx="1" fill="#107c41"/>
<path d="M2.4 5.6 L5.8 9.9 M5.8 5.6 L2.4 9.9" stroke="#fff" stroke-width="1.2"/></svg>
<span class="t " style="left:45.50px;top:16.10px;font-size:11px;line-height:15px;transform-origin:0 50%;transform:scaleX(0.8957);color:#242424;">Salvamento Automático</span>
<div class="b" style="left:155.5px;top:12.5px;width:41.5px;height:19.5px;border:1px solid #5c5c5c;border-radius:10px;background:#fff;"></div>
<div class="b" style="left:158.2px;top:15.5px;width:13.6px;height:13.6px;border-radius:50%;background:#5c5c5c;"></div>
<svg class="b" style="left:208px;top:15px;" width="15" height="15" viewBox="0 0 15 15"><path d="M0.8 0.8 H11.6 L14.2 3.4 V14.2 H0.8 Z" fill="#c46ad0" stroke="#a434b8" stroke-width="1"/>
<rect x="3.6" y="0.8" width="7.6" height="4.6" fill="#f3e3f6"/><rect x="3.4" y="8.6" width="8.2" height="5.6" fill="#f3e3f6"/><rect x="5.2" y="10.2" width="4.6" height="4" fill="#c46ad0"/></svg>
<svg class="b" style="left:234px;top:15px;" width="15" height="15" viewBox="0 0 15 15"><path d="M1.2 1.2 V6.2 H6.2 M1.4 6 C4 2.6 8.5 1.6 11.3 4.2 C13.6 6.6 12.6 9.4 10.4 11.2 L6.2 14.2" fill="none" stroke="#9a9a9a" stroke-width="1.3" stroke-linecap="round" stroke-linejoin="round"/></svg>
<svg class="b" style="left:254.6px;top:20.4px;" width="6" height="4.2" viewBox="0 0 6 4.2"><path d="M1 1 L3.0 3.2 L5 1" fill="none" stroke="#b0b0b0" stroke-width="1" stroke-linecap="round" stroke-linejoin="round"/></svg>
<svg class="b" style="left:271px;top:15px;" width="15" height="15" viewBox="0 0 15 15"><path d="M13.8 1.2 V6.2 H8.8 M13.6 6 C11 2.6 6.5 1.6 3.7 4.2 C1.4 6.6 2.4 9.4 4.6 11.2 L8.8 14.2" fill="none" stroke="#9a9a9a" stroke-width="1.3" stroke-linecap="round" stroke-linejoin="round"/></svg>
<svg class="b" style="left:290.6px;top:20.4px;" width="6" height="4.2" viewBox="0 0 6 4.2"><path d="M1 1 L3.0 3.2 L5 1" fill="none" stroke="#b0b0b0" stroke-width="1" stroke-linecap="round" stroke-linejoin="round"/></svg>
<svg class="b" style="left:303px;top:15px;" width="16" height="15" viewBox="0 0 16 15"><rect x="0.6" y="0.8" width="14.6" height="12.8" fill="#fff"/>
<rect x="5" y="4.4" width="10.2" height="9.2" fill="#4f9be6"/>
<path d="M5 4.4 V13.8 M10 1 V13.8 M0.6 4.4 H15.2 M0.6 7.4 H15.2 M0.6 10.6 H15.2" stroke="#6a6a6a" stroke-width="0.8" fill="none"/>
<path d="M0 0.9 H15.6 M0.7 0.4 V14" stroke="#3c3c3c" stroke-width="1.3" fill="none"/>
<path d="M15.2 1 V13.8 H0.6" stroke="#2f7fd0" stroke-width="0.9" stroke-dasharray="1.6 1.2" fill="none"/>
<path d="M14.4 4.6 L7 12.6" stroke="#333" stroke-width="2.6" stroke-linecap="round"/><path d="M14.2 4.8 L7.6 12" stroke="#fff" stroke-width="0.9" stroke-linecap="round"/>
<path d="M7.6 11 L4.2 13.9 L8.8 13.2 Z" fill="#1f6fc8"/></svg>
<svg class="b" style="left:324.1px;top:20.0px;" width="7" height="4.6" viewBox="0 0 7 4.6"><path d="M1 1 L3.5 3.6 L6 1" fill="none" stroke="#333" stroke-width="1.2" stroke-linecap="round" stroke-linejoin="round"/></svg>
<svg class="b" style="left:337.6px;top:15px;" width="16" height="15" viewBox="0 0 16 15"><rect x="0.6" y="0.8" width="14.6" height="12.8" fill="#fff"/>
<rect x="5" y="4.4" width="10.2" height="9.2" fill="#4f9be6"/>
<path d="M5 4.4 V13.8 M10 1 V13.8 M0.6 4.4 H15.2 M0.6 7.4 H15.2 M0.6 10.6 H15.2" stroke="#6a6a6a" stroke-width="0.8" fill="none"/>
<path d="M0 0.9 H15.6 M0.7 0.4 V14" stroke="#3c3c3c" stroke-width="1.3" fill="none"/>
<path d="M15.2 1 V13.8 H0.6" stroke="#2f7fd0" stroke-width="0.9" stroke-dasharray="1.6 1.2" fill="none"/>
<path d="M14.4 4.6 L7 12.6" stroke="#333" stroke-width="2.6" stroke-linecap="round"/><path d="M14.2 4.8 L7.6 12" stroke="#fff" stroke-width="0.9" stroke-linecap="round"/>
<path d="M7.6 11 L4.2 13.9 L8.8 13.2 Z" fill="#1f6fc8"/></svg>
<svg class="b" style="left:358.5px;top:20.0px;" width="7" height="4.6" viewBox="0 0 7 4.6"><path d="M1 1 L3.5 3.6 L6 1" fill="none" stroke="#333" stroke-width="1.2" stroke-linecap="round" stroke-linejoin="round"/></svg>
<svg class="b" style="left:378px;top:18px;" width="9" height="9" viewBox="0 0 9 9"><path d="M1 1.2 H8" stroke="#444" stroke-width="1.1"/><path d="M1.4 4.4 L4.5 7.4 L7.6 4.4" fill="none" stroke="#444" stroke-width="1.1"/></svg>
<span class="t " style="left:409.10px;top:15.10px;font-size:12px;line-height:17px;transform-origin:0 50%;transform:scaleX(0.9169);color:#242424;">base de dados Absenteísmo 2.0.xlsx • Salvo neste PC</span>
<svg class="b" style="left:678.25px;top:20.3px;" width="9.5" height="5.8" viewBox="0 0 9.5 5.8"><path d="M1 1 L4.75 4.8 L8.5 1" fill="none" stroke="#333" stroke-width="1.1" stroke-linecap="round" stroke-linejoin="round"/></svg>
<div class="b" style="left:709.5px;top:7.5px;width:345px;height:30px;background:#f9faf9;border-radius:4px;box-shadow:0 1px 2px rgba(0,0,0,.22),0 0 0 0.5px rgba(0,0,0,.06);"></div>
<svg class="b" style="left:722px;top:15px;" width="14" height="14" viewBox="0 0 14 14"><circle cx="8.6" cy="5.4" r="4.2" fill="none" stroke="#555" stroke-width="1.1"/><path d="M5.6 8.4 L0.8 13.2" stroke="#555" stroke-width="1.1" stroke-linecap="round"/></svg>
<span class="t " style="left:748.10px;top:13.60px;font-size:13px;line-height:18px;transform-origin:0 50%;transform:scaleX(0.9342);color:#616161;">Pesquisar</span>
<svg class="b" style="left:1275.6px;top:11.1px;" width="22.6" height="22.6" viewBox="130 115 510 510"><defs><clipPath id="avc"><circle cx="385" cy="370" r="245"/></clipPath></defs>
<g clip-path="url(#avc)"><rect x="130" y="115" width="510" height="510" fill="#cbb7a2"/>
<rect x="130" y="115" width="510" height="120" fill="#e4d8c8"/>
<rect x="410" y="175" width="90" height="110" fill="#8a7f5c"/><rect x="440" y="200" width="40" height="60" fill="#d8b860"/>
<rect x="450" y="365" width="160" height="190" fill="#3b322e"/><rect x="495" y="420" width="55" height="50" fill="#e0ae2e"/>
<ellipse cx="265" cy="305" rx="62" ry="80" fill="#9a6a50"/>
<path d="M200 290 Q200 215 265 220 Q330 222 326 290 Q300 250 232 262 Z" fill="#1d1512"/>
<path d="M205 320 Q215 400 265 400 Q315 400 325 320 Q300 370 265 368 Q230 370 205 320 Z" fill="#2a1c17"/>
<path d="M140 560 Q150 400 235 385 L300 385 Q345 330 400 400 Q450 460 450 600 L140 600 Z" fill="#17131a"/>
<path d="M240 395 L305 395 L335 570 L255 570 Z" fill="#ece2e8"/>
<rect x="130" y="560" width="510" height="70" fill="#6e2f22"/></g>
<circle cx="385" cy="370" r="245" fill="none" stroke="#d8453c" stroke-width="20"/></svg>
<svg class="b" style="left:1327px;top:21px;" width="11" height="2" viewBox="0 0 11 2"><path d="M0.5 1 H10" stroke="#222" stroke-width="1.1"/></svg>
<svg class="b" style="left:1371.5px;top:17.5px;" width="11" height="10" viewBox="0 0 11 10"><rect x="0.6" y="2.4" width="7.6" height="7" rx="1.6" fill="none" stroke="#222" stroke-width="1.1"/><path d="M2.6 2.2 V1.8 Q2.6 0.6 3.8 0.6 H8.6 Q10.4 0.6 10.4 2.4 V6.6 Q10.4 7.6 9.4 7.8" fill="none" stroke="#222" stroke-width="1.1"/></svg>
<svg class="b" style="left:1417.5px;top:17.5px;" width="10.5" height="10.5" viewBox="0 0 10.5 10.5"><path d="M0.5 0.5 L10 10 M10 0.5 L0.5 10" stroke="#222" stroke-width="1.1"/></svg>
<span class="t " style="left:6.50px;top:50.80px;font-size:13.6px;line-height:19px;transform-origin:0 50%;transform:scaleX(0.9759);color:#242424;">Arquivo</span>
<span class="t " style="left:157.10px;top:50.80px;font-size:13.6px;line-height:19px;transform-origin:0 50%;transform:scaleX(0.9475);color:#242424;">Inserir</span>
<span class="t " style="left:211.10px;top:50.80px;font-size:13.6px;line-height:19px;transform-origin:0 50%;transform:scaleX(0.9352);color:#242424;">Layout da Página</span>
<span class="t " style="left:329.50px;top:50.80px;font-size:13.6px;line-height:19px;transform-origin:0 50%;transform:scaleX(0.9246);color:#242424;">Fórmulas</span>
<span class="t " style="left:399.50px;top:50.80px;font-size:13.6px;line-height:19px;transform-origin:0 50%;transform:scaleX(0.9311);color:#242424;">Dados</span>
<span class="t " style="left:454.10px;top:50.80px;font-size:13.6px;line-height:19px;transform-origin:0 50%;transform:scaleX(0.8915);color:#242424;">Revisão</span>
<span class="t " style="left:516.90px;top:50.80px;font-size:13.6px;line-height:19px;transform-origin:0 50%;transform:scaleX(0.9175);color:#242424;">Exibir</span>
<span class="t " style="left:565.50px;top:50.80px;font-size:13.6px;line-height:19px;transform-origin:0 50%;transform:scaleX(0.9868);color:#242424;">Automatizar</span>
<span class="t " style="left:655.50px;top:50.80px;font-size:13.6px;line-height:19px;transform-origin:0 50%;transform:scaleX(0.9304);color:#242424;">Desenvolvedor</span>
<span class="t " style="left:758.50px;top:50.80px;font-size:13.6px;line-height:19px;transform-origin:0 50%;transform:scaleX(0.9488);color:#242424;">Ajuda</span>
<span class="t " style="left:809.50px;top:50.80px;font-size:13.6px;line-height:19px;transform-origin:0 50%;transform:scaleX(0.9687);color:#242424;">Acrobat</span>
<span class="t " style="left:63.10px;top:50.80px;font-size:13.6px;line-height:19px;transform-origin:0 50%;transform:scaleX(0.8836);color:#1a1a1a;font-weight:bold;">Página Inicial</span>
<div class="b" style="left:63px;top:69.6px;width:77.6px;height:2px;background:#107c41;border-radius:1px;"></div>
<span class="t " style="left:873.10px;top:50.80px;font-size:13.6px;line-height:19px;transform-origin:0 50%;transform:scaleX(0.9233);color:#107c41;">Design da Tabela</span>
<div class="b" style="left:1183px;top:48px;width:99.5px;height:22.6px;background:#fff;border:1px solid #b5b5b5;border-radius:4px;"></div>
<svg class="b" style="left:1188px;top:54px;" width="11" height="10.5" viewBox="0 0 11 10.5"><path d="M1.2 0.6 H9.4 Q10.2 0.6 10.2 1.4 V6.6 Q10.2 7.4 9.4 7.4 H4.6 L2.4 9.6 V7.4 H1.2 Q0.6 7.4 0.6 6.6 V1.4 Q0.6 0.6 1.2 0.6 Z" fill="none" stroke="#333" stroke-width="1"/></svg>
<span class="t " style="left:1202.10px;top:50.70px;font-size:13.6px;line-height:19px;transform-origin:0 50%;transform:scaleX(0.9599);color:#242424;">Comentários</span>
<div class="b" style="left:1290px;top:48px;width:144px;height:22.6px;background:#107c41;border-radius:4px;"></div>
<svg class="b" style="left:1294.4px;top:53.4px;" width="11" height="11.5" viewBox="0 0 11 11.5"><path d="M4.2 3.4 H1.6 Q0.6 3.4 0.6 4.4 V9.8 Q0.6 10.8 1.6 10.8 H7.6 Q8.6 10.8 8.6 9.8 V8.6" fill="none" stroke="#fff" stroke-width="1"/><path d="M6.4 0.8 L10.2 4 L6.4 7.2 V5.4 Q4 5.4 2.8 7.6 Q3 3.2 6.4 2.6 Z" fill="none" stroke="#fff" stroke-width="1" stroke-linejoin="round"/></svg>
<span class="t " style="left:1309.10px;top:50.70px;font-size:13.6px;line-height:19px;transform-origin:0 50%;transform:scaleX(0.9810);color:#fff;">Compartilhamento</span>
<svg class="b" style="left:1423.7px;top:57.8px;" width="6.6" height="4.4" viewBox="0 0 6.6 4.4"><path d="M1 1 L3.3 3.4 L5.6 1" fill="none" stroke="#fff" stroke-width="1.2" stroke-linecap="round" stroke-linejoin="round"/></svg>
<div class="b" style="left:8px;top:74px;width:1429px;height:93px;background:#fff;border-radius:8px;box-shadow:0 1px 3px rgba(0,0,0,.18);"></div>
<div class="b" style="left:117px;top:78.5px;width:1px;height:83.0px;background:#d6d6d6;"></div>
<div class="b" style="left:336px;top:78.5px;width:1px;height:83.0px;background:#d6d6d6;"></div>
<div class="b" style="left:527px;top:78.5px;width:1px;height:83.0px;background:#d6d6d6;"></div>
<div class="b" style="left:677px;top:78.5px;width:1px;height:83.0px;background:#d6d6d6;"></div>
<div class="b" style="left:856px;top:78.5px;width:1px;height:83.0px;background:#d6d6d6;"></div>
<div class="b" style="left:959px;top:78.5px;width:1px;height:83.0px;background:#d6d6d6;"></div>
<div class="b" style="left:1143px;top:78.5px;width:1px;height:83.0px;background:#d6d6d6;"></div>
<div class="b" style="left:1227px;top:78.5px;width:1px;height:83.0px;background:#d6d6d6;"></div>
<div class="b" style="left:1284px;top:78.5px;width:1px;height:83.0px;background:#d6d6d6;"></div>
<div class="b" style="left:1346px;top:78.5px;width:1px;height:83.0px;background:#d6d6d6;"></div>
<div class="b" style="left:1409px;top:78.5px;width:1px;height:83.0px;background:#d6d6d6;"></div>
<svg class="b" style="left:105.8px;top:154.6px;" width="8" height="8" viewBox="0 0 8 8"><path d="M0.5 6.5 V0.5 H6.5" fill="none" stroke="#555" stroke-width="1"/><path d="M2.6 2.6 L7 7 M7 3.6 V7 H3.6" fill="none" stroke="#555" stroke-width="1"/></svg>
<svg class="b" style="left:325.8px;top:154.6px;" width="8" height="8" viewBox="0 0 8 8"><path d="M0.5 6.5 V0.5 H6.5" fill="none" stroke="#555" stroke-width="1"/><path d="M2.6 2.6 L7 7 M7 3.6 V7 H3.6" fill="none" stroke="#555" stroke-width="1"/></svg>
<svg class="b" style="left:516px;top:154.6px;" width="8" height="8" viewBox="0 0 8 8"><path d="M0.5 6.5 V0.5 H6.5" fill="none" stroke="#555" stroke-width="1"/><path d="M2.6 2.6 L7 7 M7 3.6 V7 H3.6" fill="none" stroke="#555" stroke-width="1"/></svg>
<svg class="b" style="left:666.8px;top:154.6px;" width="8" height="8" viewBox="0 0 8 8"><path d="M0.5 6.5 V0.5 H6.5" fill="none" stroke="#555" stroke-width="1"/><path d="M2.6 2.6 L7 7 M7 3.6 V7 H3.6" fill="none" stroke="#555" stroke-width="1"/></svg>
<span class="t " style="left:15.20px;top:150.90px;font-size:11px;line-height:15px;transform-origin:0 50%;transform:scaleX(0.8985);color:#444;">Área de Transfer...</span>
<span class="t " style="left:206.80px;top:150.90px;font-size:11px;line-height:15px;transform-origin:0 50%;transform:scaleX(0.8782);color:#444;">Fonte</span>
<span class="t " style="left:396.40px;top:150.90px;font-size:11px;line-height:15px;transform-origin:0 50%;transform:scaleX(0.8880);color:#444;">Alinhamento</span>
<span class="t " style="left:576.30px;top:150.90px;font-size:11px;line-height:15px;transform-origin:0 50%;transform:scaleX(0.9330);color:#444;">Número</span>
<span class="t " style="left:752.10px;top:150.90px;font-size:11px;line-height:15px;transform-origin:0 50%;transform:scaleX(0.8766);color:#444;">Estilos</span>
<span class="t " style="left:891.50px;top:150.90px;font-size:11px;line-height:15px;transform-origin:0 50%;transform:scaleX(0.8560);color:#444;">Células</span>
<span class="t " style="left:1035.70px;top:150.90px;font-size:11px;line-height:15px;transform-origin:0 50%;transform:scaleX(0.8950);color:#444;">Edição</span>
<span class="t " style="left:1156.10px;top:150.90px;font-size:11px;line-height:15px;transform-origin:0 50%;transform:scaleX(0.8909);color:#444;">Suplementos</span>
<span class="t " style="left:1287.50px;top:150.90px;font-size:11px;line-height:15px;transform-origin:0 50%;transform:scaleX(0.9154);color:#444;">Adobe Acr...</span>
<span class="t " style="left:1372.90px;top:150.90px;font-size:11px;line-height:15px;transform-origin:0 50%;transform:scaleX(0.8756);color:#444;">AI</span>
<svg class="b" style="left:29.5px;top:81.5px;" width="27" height="29" viewBox="0 0 27 29"><rect x="0.9" y="4.4" width="19" height="21" rx="1.2" fill="#fbfbfb" stroke="#ef9a3c" stroke-width="1.7"/>
<path d="M2.4 6 V23.8 H11" fill="none" stroke="#ffd88a" stroke-width="1.2"/>
<path d="M4.6 7.2 V3.6 H7.6 Q8.4 0.6 10.7 0.6 Q13 0.6 13.8 3.6 H16.8 V7.2 Z" fill="#fbfbfb" stroke="#6e6e6e" stroke-width="1.2" stroke-linejoin="round"/>
<rect x="13.4" y="11" width="12.4" height="16.6" fill="#f6f6f6" stroke="#555" stroke-width="1.2"/></svg>
<span class="t " style="left:26.50px;top:114.00px;font-size:12px;line-height:17px;transform-origin:0 50%;transform:scaleX(0.9521);color:#242424;">Colar</span>
<svg class="b" style="left:36.4px;top:132.6px;" width="6.8" height="4.4" viewBox="0 0 6.8 4.4"><path d="M1 1 L3.4 3.4 L5.8 1" fill="none" stroke="#333" stroke-width="1.2" stroke-linecap="round" stroke-linejoin="round"/></svg>
<svg class="b" style="left:67.5px;top:81px;" width="11" height="15" viewBox="0 0 11 15"><path d="M2.4 0.6 L7.6 10.2 M8.6 0.6 L3.4 10.2" stroke="#444" stroke-width="1" stroke-linecap="round"/><circle cx="2.6" cy="12.2" r="1.9" fill="none" stroke="#2f86d6" stroke-width="1.1"/><circle cx="8.4" cy="12.2" r="1.9" fill="none" stroke="#2f86d6" stroke-width="1.1"/></svg>
<svg class="b" style="left:65px;top:104.5px;" width="16" height="15.5" viewBox="0 0 16 15.5"><path d="M4.4 11.6 H1.6 Q0.6 11.6 0.6 10.6 V1.6 Q0.6 0.6 1.6 0.6 H7.2 L8.6 2" fill="none" stroke="#444" stroke-width="1"/><path d="M6.4 3.8 H11.2 L14.6 7.2 V14 Q14.6 14.8 13.8 14.8 H6.4 Q5.6 14.8 5.6 14 V4.6 Q5.6 3.8 6.4 3.8 Z" fill="#fff" stroke="#444" stroke-width="1"/><path d="M8 9.4 H12.4 M8 11.8 H12.4" stroke="#444" stroke-width="0.9"/></svg>
<svg class="b" style="left:91.4px;top:110.1px;" width="6.8" height="4.4" viewBox="0 0 6.8 4.4"><path d="M1 1 L3.4 3.4 L5.8 1" fill="none" stroke="#333" stroke-width="1.2" stroke-linecap="round" stroke-linejoin="round"/></svg>
<svg class="b" style="left:66px;top:129px;" width="15" height="14" viewBox="0 0 15 14"><path d="M0.6 6.2 L6.8 3.2 L11.8 8.4 L6.4 13.4 Z" fill="#fff3d6" stroke="#e07a1f" stroke-width="1.2" stroke-linejoin="round"/><path d="M0.6 6.2 L6.4 13.4 L8.6 11.4 L3.4 7.4 Z" fill="#e07a1f"/><path d="M6.6 2.6 L12.4 8.6" stroke="#444" stroke-width="1.3" stroke-linecap="round"/><path d="M8.8 3.6 L12 0.8 Q13.2 0 14 1 Q14.8 2 13.8 3 L11 6" fill="#fff" stroke="#444" stroke-width="1.1" stroke-linejoin="round"/></svg>
<div class="b" style="left:125px;top:84.4px;width:107.4px;height:22.4px;background:#fff;border:1px solid #8a8a8a;border-radius:4px;"></div>
<span class="t " style="left:127.30px;top:88.10px;font-size:12px;line-height:17px;transform-origin:0 50%;transform:scaleX(0.9581);color:#242424;">Arial</span>
<svg class="b" style="left:222.3px;top:94.3px;" width="6.6" height="4.4" viewBox="0 0 6.6 4.4"><path d="M1 1 L3.3 3.4 L5.6 1" fill="none" stroke="#333" stroke-width="1.2" stroke-linecap="round" stroke-linejoin="round"/></svg>
<div class="b" style="left:234.2px;top:84.4px;width:47.2px;height:22.4px;background:#fff;border:1px solid #8a8a8a;border-radius:4px;"></div>
<span class="t " style="left:236.70px;top:88.10px;font-size:12px;line-height:17px;transform-origin:0 50%;transform:scaleX(0.8841);color:#242424;">10</span>
<svg class="b" style="left:271.3px;top:94.3px;" width="6.6" height="4.4" viewBox="0 0 6.6 4.4"><path d="M1 1 L3.3 3.4 L5.6 1" fill="none" stroke="#333" stroke-width="1.2" stroke-linecap="round" stroke-linejoin="round"/></svg>
<span class="t" style="left:287.4px;top:86.4px;font-size:16px;line-height:18px;color:#333;">A</span>
<svg class="b" style="left:297.2px;top:88.2px;" width="5" height="3.5" viewBox="0 0 5 3.5"><path d="M0.5 3 L2.5 0.6 L4.5 3" fill="none" stroke="#2f86d6" stroke-width="1.1"/></svg>
<span class="t" style="left:313px;top:87.5px;font-size:13px;line-height:15px;color:#333;">A</span>
<svg class="b" style="left:321.5px;top:88px;" width="5" height="3.5" viewBox="0 0 5 3.5"><path d="M0.5 0.6 L2.5 3 L4.5 0.6" fill="none" stroke="#2f86d6" stroke-width="1.1"/></svg>
<span class="t" style="left:130.5px;top:117px;font-size:13.5px;line-height:16px;color:#222;font-weight:bold;">N</span>
<span class="t" style="left:157px;top:116.6px;font-size:15px;line-height:18px;color:#333;font-style:italic;font-family:'Liberation Serif',serif;">I</span>
<span class="t" style="left:180.6px;top:117px;font-size:12.4px;line-height:16px;color:#333;">S</span>
<div class="b" style="left:180.6px;top:131.2px;width:7.6px;height:1px;background:#333;"></div>
<svg class="b" style="left:198.5px;top:124.3px;" width="6.6" height="4.4" viewBox="0 0 6.6 4.4"><path d="M1 1 L3.3 3.4 L5.6 1" fill="none" stroke="#333" stroke-width="1.2" stroke-linecap="round" stroke-linejoin="round"/></svg>
<div class="b" style="left:212px;top:115px;width:1px;height:22px;background:#d6d6d6;"></div>
<svg class="b" style="left:217.5px;top:118px;" width="15" height="15" viewBox="0 0 15 15"><path d="M0.7 0.7 H14.3 M0.7 0.7 V14.3 M14.3 0.7 V14.3" stroke="#8a8a8a" stroke-width="1" stroke-dasharray="1.2 1.2"/><path d="M7.5 1 V14 M1 7.5 H14" stroke="#666" stroke-width="1"/><path d="M0.5 14.3 H14.5" stroke="#333" stroke-width="1.4"/></svg>
<svg class="b" style="left:239.2px;top:124.3px;" width="6.6" height="4.4" viewBox="0 0 6.6 4.4"><path d="M1 1 L3.3 3.4 L5.6 1" fill="none" stroke="#333" stroke-width="1.2" stroke-linecap="round" stroke-linejoin="round"/></svg>
<div class="b" style="left:252px;top:115px;width:1px;height:22px;background:#d6d6d6;"></div>
<svg class="b" style="left:258px;top:117.5px;" width="16" height="16" viewBox="0 0 16 16"><path d="M6.2 1.4 L12 7.2 L7.6 11 L2.6 6.2 Z" fill="#fff" stroke="#444" stroke-width="1" stroke-linejoin="round"/><path d="M5.6 0.6 L7.6 2.8" stroke="#444" stroke-width="1"/><path d="M11.6 4.6 Q13.4 6.4 12.8 9.4" fill="none" stroke="#2f86d6" stroke-width="1.3"/><rect x="0" y="12.2" width="15.4" height="3.4" fill="#ffeb00"/></svg>
<svg class="b" style="left:279.7px;top:124.3px;" width="6.6" height="4.4" viewBox="0 0 6.6 4.4"><path d="M1 1 L3.3 3.4 L5.6 1" fill="none" stroke="#333" stroke-width="1.2" stroke-linecap="round" stroke-linejoin="round"/></svg>
<span class="t" style="left:299px;top:114.8px;font-size:15px;line-height:18px;color:#333;">A</span>
<div class="b" style="left:297px;top:129.7px;width:15px;height:3.4px;background:#e81123;"></div>
<svg class="b" style="left:317.9px;top:124.3px;" width="6.6" height="4.4" viewBox="0 0 6.6 4.4"><path d="M1 1 L3.3 3.4 L5.6 1" fill="none" stroke="#333" stroke-width="1.2" stroke-linecap="round" stroke-linejoin="round"/></svg>
<div class="b" style="left:368.6px;top:84.4px;width:22.8px;height:22.4px;background:#ebebeb;border:1px solid #8a8a8a;border-radius:4px;"></div>
<div class="b" style="left:368.6px;top:114.4px;width:22.8px;height:22.6px;background:#ebebeb;border:1px solid #8a8a8a;border-radius:4px;"></div>
<svg class="b" style="left:349px;top:87.8px;" width="14" height="12.600000000000001" viewBox="0 0 14 12.600000000000001"><path d="M0.0 0.5 H14.0" stroke="#444" stroke-width="1.2"/><path d="M2.0 4.7 H12.0" stroke="#444" stroke-width="1.2"/><path d="M0.0 8.9 H14.0" stroke="#444" stroke-width="1.2"/></svg>
<svg class="b" style="left:373px;top:90px;" width="14" height="12.600000000000001" viewBox="0 0 14 12.600000000000001"><path d="M0.0 0.5 H14.0" stroke="#444" stroke-width="1.2"/><path d="M2.0 4.7 H12.0" stroke="#444" stroke-width="1.2"/><path d="M0.0 8.9 H14.0" stroke="#444" stroke-width="1.2"/></svg>
<svg class="b" style="left:397.4px;top:94.6px;" width="14" height="12.600000000000001" viewBox="0 0 14 12.600000000000001"><path d="M0.0 0.5 H14.0" stroke="#444" stroke-width="1.2"/><path d="M2.0 4.7 H12.0" stroke="#444" stroke-width="1.2"/><path d="M0.0 8.9 H14.0" stroke="#444" stroke-width="1.2"/></svg>
<svg class="b" style="left:349px;top:119.4px;" width="14" height="16.4" viewBox="0 0 14 16.4"><path d="M0 0.5 H14" stroke="#444" stroke-width="1.2"/><path d="M0 4.6 H9" stroke="#444" stroke-width="1.2"/><path d="M0 8.7 H14" stroke="#444" stroke-width="1.2"/><path d="M0 12.799999999999999 H9" stroke="#444" stroke-width="1.2"/></svg>
<svg class="b" style="left:373px;top:119.4px;" width="14" height="16.4" viewBox="0 0 14 16.4"><path d="M0.0 0.5 H14.0" stroke="#444" stroke-width="1.2"/><path d="M2.5 4.6 H11.5" stroke="#444" stroke-width="1.2"/><path d="M0.0 8.7 H14.0" stroke="#444" stroke-width="1.2"/><path d="M2.5 12.799999999999999 H11.5" stroke="#444" stroke-width="1.2"/></svg>
<svg class="b" style="left:397.4px;top:119.4px;" width="14" height="16.4" viewBox="0 0 14 16.4"><path d="M0 0.5 H14" stroke="#444" stroke-width="1.2"/><path d="M5 4.6 H14" stroke="#444" stroke-width="1.2"/><path d="M0 8.7 H14" stroke="#444" stroke-width="1.2"/><path d="M5 12.799999999999999 H14" stroke="#444" stroke-width="1.2"/></svg>
<svg class="b" style="left:420.5px;top:86.5px;" width="17" height="17" viewBox="0 0 17 17"><text x="-1" y="9.6" font-size="9.5" fill="#444" transform="rotate(-45 4.5 8)" font-family="Liberation Sans, sans-serif">ab</text><path d="M5.4 16.6 L15.4 6.6 M10.6 6.2 H15.8 V11.4" fill="none" stroke="#2f86d6" stroke-width="1.1"/></svg>
<svg class="b" style="left:441.0px;top:93.4px;" width="6.6" height="4.4" viewBox="0 0 6.6 4.4"><path d="M1 1 L3.3 3.4 L5.6 1" fill="none" stroke="#333" stroke-width="1.2" stroke-linecap="round" stroke-linejoin="round"/></svg>
<svg class="b" style="left:421.4px;top:119.4px;" width="14" height="13" viewBox="0 0 14 13"><path d="M0 0.5 H14 M7.5 4.6 H14 M7.5 8.7 H14 M0 12.8 H14" stroke="#555" stroke-width="1"/><path d="M6 6.6 H0.8 M2.8 4.4 L0.6 6.6 L2.8 8.8" fill="none" stroke="#2f86d6" stroke-width="1.1"/></svg>
<svg class="b" style="left:445.5px;top:119.4px;" width="14" height="13" viewBox="0 0 14 13"><path d="M0 0.5 H14 M7.5 4.6 H14 M7.5 8.7 H14 M0 12.8 H14" stroke="#555" stroke-width="1"/><path d="M0.4 6.6 H5.6 M3.6 4.4 L5.8 6.6 L3.6 8.8" fill="none" stroke="#2f86d6" stroke-width="1.1"/></svg>
<div class="b" style="left:469px;top:83.5px;width:1px;height:58.5px;background:#d6d6d6;"></div>
<svg class="b" style="left:480.5px;top:88.5px;" width="15" height="15" viewBox="0 0 15 15"><text x="0" y="6.6" font-size="8.5" fill="#444" font-family="Liberation Sans, sans-serif">ab</text><text x="0" y="13.6" font-size="8.5" fill="#444" font-family="Liberation Sans, sans-serif">c</text><path d="M10.6 4.6 Q14 8 11.8 10.4 H6.4 M8.4 8.2 L6.2 10.4 L8.4 12.6" fill="none" stroke="#2f86d6" stroke-width="1.2"/></svg>
<svg class="b" style="left:478.6px;top:118.2px;" width="15" height="14.5" viewBox="0 0 15 14.5"><rect x="0.6" y="0.6" width="13.4" height="13.2" fill="#f2f2f2" stroke="#b0b0b0" stroke-width="1"/><path d="M0.6 4 H14 M0.6 10.4 H14 M7.3 0.6 V4 M7.3 10.4 V13.8" stroke="#b0b0b0" stroke-width="1"/><path d="M3 7.2 H11.6 M4.6 5.8 L3 7.2 L4.6 8.6 M10 5.8 L11.6 7.2 L10 8.6" fill="none" stroke="#b8b8b8" stroke-width="0.9"/></svg>
<svg class="b" style="left:504.9px;top:124.3px;" width="6.6" height="4.4" viewBox="0 0 6.6 4.4"><path d="M1 1 L3.3 3.4 L5.6 1" fill="none" stroke="#bdbdbd" stroke-width="1.1" stroke-linecap="round" stroke-linejoin="round"/></svg>
<div class="b" style="left:535.3px;top:84.4px;width:135.3px;height:22.4px;background:#fff;border:1px solid #8a8a8a;border-radius:4px;"></div>
<span class="t " style="left:537.50px;top:88.10px;font-size:12px;line-height:17px;transform-origin:0 50%;transform:scaleX(0.8929);color:#242424;">Geral</span>
<svg class="b" style="left:660.5px;top:94.3px;" width="6.6" height="4.4" viewBox="0 0 6.6 4.4"><path d="M1 1 L3.3 3.4 L5.6 1" fill="none" stroke="#333" stroke-width="1.2" stroke-linecap="round" stroke-linejoin="round"/></svg>
<svg class="b" style="left:539px;top:120.6px;" width="16" height="13.5" viewBox="0 0 16 13.5"><rect x="0.6" y="0.6" width="13.6" height="8.6" fill="#fff" stroke="#444" stroke-width="1.1"/><path d="M3 2.6 V7.2 M5.4 2.6 V7.2 M3 2.6 H5.4 M7.6 2.6 V7.2 M10 2.6 V5" stroke="#444" stroke-width="0.9" fill="none"/><ellipse cx="11.6" cy="7.4" rx="3.4" ry="1.6" fill="#fff" stroke="#e0742a" stroke-width="1"/><path d="M8.2 7.4 V11.4 Q8.2 13 11.6 13 Q15 13 15 11.4 V7.4" fill="#fff" stroke="#e0742a" stroke-width="1"/><path d="M8.2 9.4 Q8.2 11 11.6 11 Q15 11 15 9.4" fill="none" stroke="#e0742a" stroke-width="1"/></svg>
<svg class="b" style="left:560.7px;top:124.3px;" width="6.6" height="4.4" viewBox="0 0 6.6 4.4"><path d="M1 1 L3.3 3.4 L5.6 1" fill="none" stroke="#333" stroke-width="1.2" stroke-linecap="round" stroke-linejoin="round"/></svg>
<span class="t" style="left:577.3px;top:114.5px;font-size:17.5px;line-height:22px;color:#444;transform:scaleX(.9);transform-origin:0 50%;">%</span>
<span class="t " style="left:600.50px;top:119.40px;font-size:10px;line-height:14px;transform-origin:0 50%;transform:scaleX(0.9591);color:#8a8a8a;">000</span>
<div class="b" style="left:622px;top:115px;width:1px;height:22px;background:#d6d6d6;"></div>
<svg class="b" style="left:627.8px;top:118.6px;" width="15" height="15" viewBox="0 0 15 15"><path d="M7 3.6 H1 M3.2 1.2 L0.8 3.6 L3.2 6" fill="none" stroke="#2f86d6" stroke-width="1.2"/><text x="9.4" y="7.2" font-size="8.6" fill="#333" font-family="Liberation Sans, sans-serif">0</text><text x="2.6" y="14.8" font-size="8.6" fill="#333" font-family="Liberation Sans, sans-serif">.00</text></svg>
<svg class="b" style="left:651.6px;top:118.6px;" width="15" height="15" viewBox="0 0 15 15"><text x="3.4" y="6.6" font-size="8.6" fill="#333" font-family="Liberation Sans, sans-serif">.00</text><path d="M0.4 11.2 H6.4 M4.2 8.8 L6.6 11.2 L4.2 13.6" fill="none" stroke="#2f86d6" stroke-width="1.2"/><text x="7.6" y="14.8" font-size="8.6" fill="#333" font-family="Liberation Sans, sans-serif">.0</text></svg>
<svg class="b" style="left:689px;top:81px;" width="16" height="15" viewBox="0 0 16 15"><rect x="0.6" y="0.6" width="14.8" height="13.4" rx="1" fill="#fff" stroke="#555" stroke-width="1.1"/><path d="M0.6 5 H15.4 M0.6 9.4 H15.4 M3.4 0.6 V14 M7.6 0.6 V14 M11.6 0.6 V14" stroke="#666" stroke-width="0.8"/><rect x="3" y="1.2" width="6.2" height="3.3" fill="#e8423f"/><rect x="3" y="5.6" width="3.8" height="3.3" fill="#2f86d6"/><rect x="3" y="10" width="8" height="3.3" fill="#e8423f"/></svg>
<svg class="b" style="left:689px;top:105.2px;" width="16" height="15" viewBox="0 0 16 15"><rect x="0.6" y="0.8" width="14.6" height="12.8" fill="#fff"/><rect x="5" y="4.4" width="10.2" height="9.2" fill="#3f8fe0"/>
<path d="M5 1 V13.8 M10 1 V13.8 M0.6 4.4 H15.2 M0.6 7.4 H15.2 M0.6 10.6 H15.2" stroke="#6a6a6a" stroke-width="0.8" fill="none"/>
<path d="M0 0.9 H15.6 M0.7 0.4 V14" stroke="#3c3c3c" stroke-width="1.3" fill="none"/><path d="M15.2 1 V13.8 H0.6" stroke="#555" stroke-width="0.9" fill="none"/><path d="M14.6 4.8 L7.2 12.4" stroke="#333" stroke-width="2.6" stroke-linecap="round"/><path d="M14.4 5 L7.8 11.8" stroke="#fff" stroke-width="0.9" stroke-linecap="round"/><path d="M7.8 10.8 L3.6 14.4 L9.2 13.4 Z" fill="#1f6fc8"/></svg>
<svg class="b" style="left:689px;top:129.2px;" width="16" height="15" viewBox="0 0 16 15"><rect x="0.6" y="0.6" width="14.8" height="13.2" rx="1" fill="#fff" stroke="#444" stroke-width="1.2"/><path d="M0.6 3 H15.4 M3 0.6 V13.8 M0.6 11 H15.4" stroke="#666" stroke-width="0.8"/>
<rect x="3.4" y="3.4" width="9.8" height="7.4" fill="#3f8fe0"/><path d="M14.6 4.8 L7.2 12.4" stroke="#333" stroke-width="2.6" stroke-linecap="round"/><path d="M14.4 5 L7.8 11.8" stroke="#fff" stroke-width="0.9" stroke-linecap="round"/><path d="M7.8 10.8 L3.6 14.4 L9.2 13.4 Z" fill="#1f6fc8"/></svg>
<span class="t " style="left:708.10px;top:80.50px;font-size:12px;line-height:17px;transform-origin:0 50%;transform:scaleX(0.9411);color:#242424;">Formatação Condicional</span>
<svg class="b" style="left:833.4px;top:86.2px;" width="6.6" height="4.4" viewBox="0 0 6.6 4.4"><path d="M1 1 L3.3 3.4 L5.6 1" fill="none" stroke="#333" stroke-width="1.2" stroke-linecap="round" stroke-linejoin="round"/></svg>
<span class="t " style="left:708.10px;top:104.50px;font-size:12px;line-height:17px;transform-origin:0 50%;transform:scaleX(0.9406);color:#242424;">Formatar como Tabela</span>
<svg class="b" style="left:823.7px;top:110.2px;" width="6.6" height="4.4" viewBox="0 0 6.6 4.4"><path d="M1 1 L3.3 3.4 L5.6 1" fill="none" stroke="#333" stroke-width="1.2" stroke-linecap="round" stroke-linejoin="round"/></svg>
<span class="t " style="left:708.10px;top:128.70px;font-size:12px;line-height:17px;transform-origin:0 50%;transform:scaleX(0.9141);color:#242424;">Estilos de Célula</span>
<svg class="b" style="left:792.7px;top:134.4px;" width="6.6" height="4.4" viewBox="0 0 6.6 4.4"><path d="M1 1 L3.3 3.4 L5.6 1" fill="none" stroke="#333" stroke-width="1.2" stroke-linecap="round" stroke-linejoin="round"/></svg>
<svg class="b" style="left:868.2px;top:81px;" width="16" height="15" viewBox="0 0 16 15"><rect x="0.7" y="0.7" width="14.6" height="13.2" rx="1.2" fill="#fff" stroke="#4a4a4a" stroke-width="1.2"/><path d="M0.7 4.8 H15.3 M0.7 9.6 H15.3 M5.4 0.7 V13.9 M10.4 0.7 V13.9" stroke="#4a4a4a" stroke-width="1"/><rect x="0" y="4" width="6" height="6.4" fill="#fff"/><rect x="5.6" y="4.4" width="10" height="5.6" fill="#2f86d6"/><path d="M10.4 5 V9.4" stroke="#7db6ea" stroke-width="0.8"/><path d="M7 7.2 H1 M3.4 4.6 L0.8 7.2 L3.4 9.8" fill="none" stroke="#2f86d6" stroke-width="1.3"/></svg>
<svg class="b" style="left:868.2px;top:105.2px;" width="16" height="15" viewBox="0 0 16 15"><rect x="0.7" y="0.7" width="14.6" height="13.2" rx="1.2" fill="#fff" stroke="#4a4a4a" stroke-width="1.2"/><path d="M0.7 4.8 H15.3 M0.7 9.6 H15.3 M5.4 0.7 V13.9 M10.4 0.7 V13.9" stroke="#4a4a4a" stroke-width="1"/><rect x="9" y="3.8" width="7" height="6.8" fill="#fff"/><path d="M3 4.6 H7.4 L9.4 7.2 L7.4 9.8 H3 Z" fill="#1f6fc8"/><rect x="4.2" y="5.8" width="2.6" height="2.8" fill="#6aaae8"/><path d="M10.6 4.8 L15.2 9.6 M15.2 4.8 L10.6 9.6" stroke="#e8323a" stroke-width="1.3"/></svg>
<svg class="b" style="left:868.2px;top:128.4px;" width="16" height="16" viewBox="0 0 16 16"><path d="M3 1.4 H13 M3 0.2 V2.6 M13 0.2 V2.6" stroke="#2f86d6" stroke-width="1.1"/><rect x="0.7" y="3.4" width="14.6" height="11.8" rx="1.2" fill="#fff" stroke="#4a4a4a" stroke-width="1.2"/><path d="M0.7 6.4 H15.3 M0.7 12.2 H15.3 M3.8 3.4 V15.2 M12.2 3.4 V15.2" stroke="#4a4a4a" stroke-width="1"/><rect x="3.8" y="6.4" width="8.4" height="5.8" fill="#2f86d6"/><rect x="6" y="7.8" width="4" height="3" fill="#6aaae8"/></svg>
<span class="t " style="left:887.10px;top:80.50px;font-size:12px;line-height:17px;transform-origin:0 50%;transform:scaleX(0.9179);color:#242424;">Inserir</span>
<svg class="b" style="left:933.9px;top:86.2px;" width="6.6" height="4.4" viewBox="0 0 6.6 4.4"><path d="M1 1 L3.3 3.4 L5.6 1" fill="none" stroke="#333" stroke-width="1.2" stroke-linecap="round" stroke-linejoin="round"/></svg>
<span class="t " style="left:887.10px;top:104.50px;font-size:12px;line-height:17px;transform-origin:0 50%;transform:scaleX(0.9110);color:#242424;">Excluir</span>
<svg class="b" style="left:936.1px;top:110.2px;" width="6.6" height="4.4" viewBox="0 0 6.6 4.4"><path d="M1 1 L3.3 3.4 L5.6 1" fill="none" stroke="#333" stroke-width="1.2" stroke-linecap="round" stroke-linejoin="round"/></svg>
<span class="t " style="left:887.10px;top:128.70px;font-size:12px;line-height:17px;transform-origin:0 50%;transform:scaleX(0.9410);color:#242424;">Formatar</span>
<svg class="b" style="left:935.6px;top:134.4px;" width="6.6" height="4.4" viewBox="0 0 6.6 4.4"><path d="M1 1 L3.3 3.4 L5.6 1" fill="none" stroke="#333" stroke-width="1.2" stroke-linecap="round" stroke-linejoin="round"/></svg>
<svg class="b" style="left:972px;top:81px;" width="13" height="14.5" viewBox="0 0 13 14.5"><path d="M12 2.6 V0.7 H1 L7 7.2 L1 13.7 H12 V11.8" fill="none" stroke="#444" stroke-width="1.1" stroke-linejoin="round"/></svg>
<svg class="b" style="left:997.0px;top:86.2px;" width="6.6" height="4.4" viewBox="0 0 6.6 4.4"><path d="M1 1 L3.3 3.4 L5.6 1" fill="none" stroke="#333" stroke-width="1.2" stroke-linecap="round" stroke-linejoin="round"/></svg>
<svg class="b" style="left:971px;top:105.2px;" width="15.4" height="14.2" viewBox="0 0 15.4 14.2"><rect x="0.6" y="0.6" width="14" height="13" fill="#fff" stroke="#555" stroke-width="1.1"/><rect x="0.6" y="0.6" width="14" height="2.4" fill="#555"/><path d="M7.6 5 V11 M5.2 8.8 L7.6 11.2 L10 8.8" fill="none" stroke="#2f86d6" stroke-width="1.2"/></svg>
<svg class="b" style="left:990.9px;top:110.2px;" width="6.6" height="4.4" viewBox="0 0 6.6 4.4"><path d="M1 1 L3.3 3.4 L5.6 1" fill="none" stroke="#333" stroke-width="1.2" stroke-linecap="round" stroke-linejoin="round"/></svg>
<svg class="b" style="left:971px;top:129px;" width="15" height="15" viewBox="0 0 15 15"><path d="M8.6 0.8 L14 6.2 L6.6 13.8 L1 8.2 Z" fill="#fff" stroke="#a434b8" stroke-width="1.1" stroke-linejoin="round"/><path d="M3.8 5.6 L9.4 11 L6.6 13.8 L1 8.2 Z" fill="#c46ad0" stroke="#a434b8" stroke-width="1"/></svg>
<svg class="b" style="left:990.9px;top:134.4px;" width="6.6" height="4.4" viewBox="0 0 6.6 4.4"><path d="M1 1 L3.3 3.4 L5.6 1" fill="none" stroke="#333" stroke-width="1.2" stroke-linecap="round" stroke-linejoin="round"/></svg>
<svg class="b" style="left:1026.8px;top:82.6px;" width="28" height="25" viewBox="0 0 28 25"><text x="-0.4" y="10.2" font-size="15" fill="#2f86d6" font-family="Liberation Sans, sans-serif">A</text><text x="0.2" y="24" font-size="14.5" fill="#444" font-family="Liberation Sans, sans-serif">Z</text><path d="M12.4 6.6 H27 L21.4 13.6 V20.4 L18.2 18.4 V13.6 Z" fill="#fff" stroke="#555" stroke-width="1.1" stroke-linejoin="round"/></svg>
<span class="t " style="left:1015.70px;top:111.90px;font-size:12px;line-height:17px;transform-origin:0 50%;transform:scaleX(0.9053);color:#242424;">Classificar</span>
<span class="t " style="left:1016.20px;top:126.90px;font-size:12px;line-height:17px;transform-origin:0 50%;transform:scaleX(0.9418);color:#242424;">e Filtrar</span>
<svg class="b" style="left:1057.4px;top:132.6px;" width="6.6" height="4.4" viewBox="0 0 6.6 4.4"><path d="M1 1 L3.3 3.4 L5.6 1" fill="none" stroke="#333" stroke-width="1.2" stroke-linecap="round" stroke-linejoin="round"/></svg>
<svg class="b" style="left:1088.5px;top:81.5px;" width="28" height="28" viewBox="0 0 28 28"><circle cx="17.4" cy="10.2" r="9.6" fill="none" stroke="#555" stroke-width="1.1"/><path d="M10.4 17 L0.6 26.8" stroke="#555" stroke-width="1.2" stroke-linecap="round"/></svg>
<span class="t " style="left:1076.20px;top:111.90px;font-size:12px;line-height:17px;transform-origin:0 50%;transform:scaleX(0.9220);color:#242424;">Localizar e</span>
<span class="t " style="left:1071.50px;top:126.90px;font-size:12px;line-height:17px;transform-origin:0 50%;transform:scaleX(0.9277);color:#242424;">Selecionar</span>
<svg class="b" style="left:1126.7px;top:132.6px;" width="6.6" height="4.4" viewBox="0 0 6.6 4.4"><path d="M1 1 L3.3 3.4 L5.6 1" fill="none" stroke="#333" stroke-width="1.2" stroke-linecap="round" stroke-linejoin="round"/></svg>
<svg class="b" style="left:1172.6px;top:81.4px;" width="27" height="27" viewBox="0 0 27 27"><rect x="0.7" y="0.7" width="25.6" height="25.6" fill="#fff" stroke="#d5502a" stroke-width="1.4"/><rect x="3.6" y="3.6" width="8" height="8" fill="none" stroke="#d5502a" stroke-width="1.2"/><rect x="15.2" y="3.6" width="8" height="8" fill="none" stroke="#d5502a" stroke-width="1.2"/><rect x="3.6" y="15.2" width="8" height="8" fill="none" stroke="#d5502a" stroke-width="1.2"/><rect x="15.2" y="15.2" width="8" height="8" fill="none" stroke="#d5502a" stroke-width="1.2"/></svg>
<span class="t " style="left:1153.30px;top:111.90px;font-size:12px;line-height:17px;transform-origin:0 50%;transform:scaleX(0.9366);color:#242424;">Suplementos</span>
<svg class="b" style="left:1242px;top:81.6px;" width="28.4" height="26.4" viewBox="128 119 605 563"><defs><linearGradient id="cg1" x1="0" y1="0" x2="0" y2="1"><stop offset="0" stop-color="#1b9cf2"/><stop offset=".5" stop-color="#3fb86e"/><stop offset=".92" stop-color="#f2d200"/></linearGradient><linearGradient id="cg2" x1="0" y1="0" x2="0" y2="1"><stop offset="0" stop-color="#a452f2"/><stop offset=".5" stop-color="#f0508a"/><stop offset="1" stop-color="#ff9c52"/></linearGradient></defs>
<path d="M420 130 H500 Q560 130 578 195 L602 290 H480 Q425 292 400 345 Z" fill="#1446d4"/>
<path d="M265 505 H395 Q440 502 470 445 L440 600 Q415 662 355 662 Q310 662 298 615 Z" fill="#f2622c"/>
<path d="M255 130 H482 Q438 138 418 200 L345 465 Q333 512 288 512 H195 Q122 512 140 440 L200 200 Q218 130 255 130 Z" fill="url(#cg1)"/>
<path d="M502 285 H650 Q738 285 716 372 L660 590 Q640 662 570 662 H382 Q437 656 455 598 L529 335 Q539 290 502 285 Z" fill="url(#cg2)"/></svg>
<span class="t " style="left:1237.40px;top:112.90px;font-size:12px;line-height:17px;transform-origin:0 50%;transform:scaleX(1.0147);color:#242424;">Copilot</span>
<svg class="b" style="left:1251.9px;top:132.6px;" width="6.8" height="4.4" viewBox="0 0 6.8 4.4"><path d="M1 1 L3.4 3.4 L5.8 1" fill="none" stroke="#333" stroke-width="1.2" stroke-linecap="round" stroke-linejoin="round"/></svg>
<svg class="b" style="left:1306.5px;top:83px;" width="25" height="27" viewBox="0 0 25 27"><path d="M9 22.4 H3 Q0.8 22.4 0.8 20.2 V3 Q0.8 0.8 3 0.8 H13 L18.4 6.2 V10" fill="none" stroke="#3f7be8" stroke-width="1.3" stroke-linejoin="round"/><path d="M4.6 15 Q8.4 11.6 9 6.4 Q9.2 5 8.2 5.2 Q7.4 5.6 8.4 8.4 Q10 12 14.2 12.6 Q15.2 12 13.8 11.6 Q9 11.6 4.6 15 Z" fill="none" stroke="#3f7be8" stroke-width="0.9"/><rect x="10.2" y="16.6" width="8.8" height="5" rx="2.5" fill="none" stroke="#3f7be8" stroke-width="1.3" transform="rotate(-45 14.6 19.1)"/><rect x="15.2" y="11.6" width="8.8" height="5" rx="2.5" fill="none" stroke="#3f7be8" stroke-width="1.3" transform="rotate(-45 19.6 14.1)"/></svg>
<span class="t " style="left:1305.50px;top:111.90px;font-size:12px;line-height:17px;transform-origin:0 50%;transform:scaleX(0.9181);color:#242424;">Crie</span>
<span class="t " style="left:1296.50px;top:126.90px;font-size:12px;line-height:17px;transform-origin:0 50%;transform:scaleX(0.8863);color:#242424;">um PDF</span>
<div class="b" style="left:1362.8px;top:79.8px;width:30px;height:30px;background:#2b2b2b;border-radius:50%;"></div>
<span class="t" style="left:1362.8px;width:30px;text-align:center;top:86.2px;font-size:10.5px;line-height:12px;color:#fff;font-weight:bold;letter-spacing:0.2px;">GPT</span>
<span class="t" style="left:1362.8px;width:30px;text-align:center;top:97.6px;font-size:3px;line-height:4px;color:#bbb;letter-spacing:0.4px;">— EXCEL —</span>
<span class="t " style="left:1356.30px;top:111.90px;font-size:12px;line-height:17px;transform-origin:0 50%;transform:scaleX(0.8538);color:#242424;">ChatGPT</span>
<span class="t " style="left:1356.80px;top:126.90px;font-size:12px;line-height:17px;transform-origin:0 50%;transform:scaleX(0.9297);color:#242424;">for Excel</span>
<svg class="b" style="left:1418.4px;top:151.3px;" width="10.6" height="6.2" viewBox="0 0 10.6 6.2"><path d="M1 1 L5.3 5.2 L9.6 1" fill="none" stroke="#333" stroke-width="1.2" stroke-linecap="round" stroke-linejoin="round"/></svg>
<div class="b" style="left:8px;top:175px;width:125.5px;height:22px;background:#fff;border-radius:4px;box-shadow:0 0 0 0.5px rgba(0,0,0,.08);"></div>
<span class="t " style="left:12.20px;top:178.20px;font-size:13px;line-height:18px;transform-origin:0 50%;transform:scaleX(0.9434);color:#242424;">V4</span>
<svg class="b" style="left:118.5px;top:183.8px;" width="10" height="6" viewBox="0 0 10 6"><path d="M1 1 L5.0 5 L9 1" fill="none" stroke="#333" stroke-width="1.1" stroke-linecap="round" stroke-linejoin="round"/></svg>
<div class="b" style="left:141.9px;top:180.4px;width:2.6px;height:2.6px;background:#222;border-radius:50%;"></div>
<div class="b" style="left:141.9px;top:184.8px;width:2.6px;height:2.6px;background:#222;border-radius:50%;"></div>
<div class="b" style="left:141.9px;top:189.2px;width:2.6px;height:2.6px;background:#222;border-radius:50%;"></div>
<div class="b" style="left:153.2px;top:175px;width:79.2px;height:22px;background:#fff;border-radius:4px;box-shadow:0 0 0 0.5px rgba(0,0,0,.08);"></div>
<svg class="b" style="left:159px;top:180.5px;" width="11" height="11" viewBox="0 0 11 11"><path d="M0.6 0.6 L10.4 10.4 M10.4 0.6 L0.6 10.4" stroke="#a8a8a8" stroke-width="1.1"/></svg>
<svg class="b" style="left:180px;top:181px;" width="15" height="10.5" viewBox="0 0 15 10.5"><path d="M0.6 6.2 L4.8 10 L14.4 0.6" fill="none" stroke="#a8a8a8" stroke-width="1.1"/></svg>
<span class="t" style="left:204px;top:175.2px;font-size:16.5px;line-height:22px;color:#222;font-style:italic;font-family:'Liberation Serif',serif;letter-spacing:-0.3px;transform-origin:0 50%;transform:scaleX(1.14);">fx</span>
<svg class="b" style="left:221.5px;top:183.7px;" width="9.6" height="5.8" viewBox="0 0 9.6 5.8"><path d="M1 1 L4.8 4.8 L8.6 1" fill="none" stroke="#8a8a8a" stroke-width="1" stroke-linecap="round" stroke-linejoin="round"/></svg>
<div class="b" style="left:237.8px;top:175px;width:1198.7px;height:22px;background:#fff;border-radius:4px;box-shadow:0 0 0 0.5px rgba(0,0,0,.08);"></div>
<span class="t" style="left:246.6px;top:177.4px;font-size:12.3px;line-height:18px;color:#1f1f1f;font-family:'Liberation Mono',monospace;transform-origin:0 50%;transform:scale(1.0189,1.08);">=SE([@[Data de Admissão]]=&quot;&quot;;&quot;&quot;;ANO(HOJE())-ANO([@[Data de Admissão]]))</span>
<svg class="b" style="left:1423.7px;top:182.5px;" width="9.6" height="5.8" viewBox="0 0 9.6 5.8"><path d="M1 1 L4.8 4.8 L8.6 1" fill="none" stroke="#333" stroke-width="1.1" stroke-linecap="round" stroke-linejoin="round"/></svg>
<div class="b" style="left:0px;top:717px;width:1445px;height:31px;background:#fff;"></div>
<div class="b" style="left:0px;top:717px;width:106px;height:31px;background:#e6eae8;border-top-right-radius:6px;"></div>
<div class="b" style="left:181px;top:717px;width:1264px;height:31px;background:#e8e9e8;border-top-left-radius:6px;"></div>
<div class="b" style="left:106px;top:717px;width:75px;height:27px;background:#fff;border-radius:0 0 6px 6px;"></div>
<div class="b" style="left:106px;top:744px;width:75px;height:4px;background:#e7e9e8;"></div>
<div class="b" style="left:106px;top:738px;width:75px;height:6px;background:#e7e9e8;"></div><div class="b" style="left:106px;top:717px;width:75px;height:27px;background:#fff;border-radius:0 0 6px 6px;"></div>
<svg class="b" style="left:23.6px;top:727.4px;" width="7" height="10" viewBox="0 0 7 10"><path d="M6 0.6 L1 5 L6 9.4" fill="none" stroke="#9a9a9a" stroke-width="1.1"/></svg>
<svg class="b" style="left:54.2px;top:727.4px;" width="7" height="10" viewBox="0 0 7 10"><path d="M1 0.6 L6 5 L1 9.4" fill="none" stroke="#9a9a9a" stroke-width="1.1"/></svg>
<span class="t " style="left:113.50px;top:721.00px;font-size:14.5px;line-height:20px;transform-origin:0 50%;transform:scaleX(0.8603);color:#1a1a1a;font-weight:bold;">Cadastros</span>
<div class="b" style="left:114px;top:740.4px;width:60px;height:1.8px;background:#107c41;border-radius:1px;"></div>
<div class="b" style="left:186px;top:724px;width:1px;height:17px;background:#d0d0d0;"></div>
<div class="b" style="left:311px;top:724px;width:1px;height:17px;background:#d0d0d0;"></div>
<div class="b" style="left:407px;top:724px;width:1px;height:17px;background:#d0d0d0;"></div>
<div class="b" style="left:462px;top:724px;width:1px;height:17px;background:#d0d0d0;"></div>
<span class="t " style="left:201.10px;top:723.20px;font-size:14.5px;line-height:20px;transform-origin:0 50%;transform:scaleX(0.8732);color:#242424;">Jornada Prevista</span>
<span class="t " style="left:325.50px;top:723.20px;font-size:14.5px;line-height:20px;transform-origin:0 50%;transform:scaleX(0.8879);color:#242424;">Ocorrências</span>
<span class="t " style="left:419.90px;top:723.20px;font-size:14.5px;line-height:20px;transform-origin:0 50%;transform:scaleX(0.9369);color:#242424;">Meta</span>
<svg class="b" style="left:502px;top:727px;" width="11" height="11" viewBox="0 0 11 11"><path d="M5.5 0 V11 M0 5.5 H11" stroke="#333" stroke-width="1.2"/></svg>
<div class="b" style="left:850px;top:718px;width:595px;height:30px;background:#e6ebe8;"></div>
<div class="b" style="left:868.8px;top:727.8px;width:2.6px;height:2.6px;background:#333;border-radius:30%;"></div>
<div class="b" style="left:868.8px;top:731.8px;width:2.6px;height:2.6px;background:#333;border-radius:30%;"></div>
<div class="b" style="left:868.8px;top:735.8px;width:2.6px;height:2.6px;background:#333;border-radius:30%;"></div>
<div class="b" style="left:885.6px;top:725.6px;width:541.4px;height:14px;background:#f3f5f4;border-radius:7px;"></div>
<svg class="b" style="left:889.6px;top:728.4px;" width="7" height="8" viewBox="0 0 7 8"><path d="M6.6 0.4 V7.6 L0.4 4 Z" fill="#6e6e6e"/></svg>
<div class="b" style="left:901px;top:728px;width:412px;height:8.4px;background:#707070;border-radius:4.2px;"></div>
<svg class="b" style="left:1417px;top:728.4px;" width="7" height="8" viewBox="0 0 7 8"><path d="M0.4 0.4 V7.6 L6.6 4 Z" fill="#6e6e6e"/></svg>
<div class="b" style="left:0px;top:748px;width:1445px;height:20px;background:#f3f3f3;"></div>
<span class="t " style="left:9.90px;top:751.70px;font-size:11px;line-height:15px;transform-origin:0 50%;transform:scaleX(0.9257);color:#333;">Pronto</span>
<svg class="b" style="left:59.4px;top:752.2px;" width="14" height="13.5" viewBox="0 0 14 13.5"><path d="M0.2 1 Q0.2 0 1.2 0 H12.4 Q13.4 0 13.4 1 V4 H0.2 Z" fill="#6b6b6b"/><path d="M0.85 0.6 V11.4 H4.6" fill="none" stroke="#555" stroke-width="1.3"/><rect x="2.4" y="5.6" width="1.3" height="1.3" fill="#444"/><rect x="2.4" y="8" width="1.3" height="1.3" fill="#444"/><circle cx="9.2" cy="8.4" r="4.2" fill="#f3f3f3" stroke="#444" stroke-width="1.2"/><circle cx="9.2" cy="8.4" r="1.9" fill="#111"/></svg>
<svg class="b" style="left:89.4px;top:751.4px;" width="14.5" height="14" viewBox="0 0 14.5 14"><circle cx="5.6" cy="2.4" r="1.5" fill="none" stroke="#444" stroke-width="1"/><path d="M0.9 4.2 Q0.2 2.2 1.6 1.6 M10.4 4.2 Q11.2 2.2 9.8 1.6 M0.9 4 Q5.6 6.4 10.4 4 M3.6 5.2 Q4 8.6 3 12.6 H4 M7.6 5.2 V8.2" fill="none" stroke="#444" stroke-width="1.1" stroke-linecap="round"/><path d="M6.6 10 L9.2 12.8 L13.8 7.4" fill="none" stroke="#444" stroke-width="1.1"/></svg>
<span class="t " style="left:105.50px;top:751.70px;font-size:11px;line-height:15px;transform-origin:0 50%;transform:scaleX(0.9127);color:#333;">Acessibilidade: tudo certo</span>
<svg class="b" style="left:1038.8px;top:752.2px;" width="15" height="14" viewBox="0 0 15 14"><path d="M4.6 9 H1.4 Q0.6 9 0.6 8.2 V1.4 Q0.6 0.6 1.4 0.6 H12.2 Q13 0.6 13 1.4 V4" fill="none" stroke="#444" stroke-width="1.1"/><path d="M0.6 1 H13" stroke="#444" stroke-width="1.6"/><circle cx="9.6" cy="9" r="2.5" fill="none" stroke="#333" stroke-width="2" stroke-dasharray="1.5 0.8"/><circle cx="9.6" cy="9" r="1.9" fill="none" stroke="#333" stroke-width="1"/><circle cx="9.6" cy="9" r="0.8" fill="#333"/></svg>
<span class="t " style="left:1055.10px;top:751.70px;font-size:11px;line-height:15px;transform-origin:0 50%;transform:scaleX(0.8967);color:#333;">Exibir Configurações</span>
<div class="b" style="left:1164.4px;top:748px;width:37.6px;height:20px;background:#dcdcdc;"></div>
<svg class="b" style="left:1176.6px;top:752.4px;" width="13" height="12" viewBox="0 0 13 12"><rect x="0.6" y="0.6" width="11.6" height="10.6" fill="none" stroke="#333" stroke-width="1.1"/><path d="M0.6 4.2 H12.2 M0.6 7.8 H12.2 M4.4 0.6 V11.2 M8.4 0.6 V11.2" stroke="#333" stroke-width="1.1"/></svg>
<svg class="b" style="left:1214px;top:752.4px;" width="13.5" height="12" viewBox="0 0 13.5 12"><rect x="0.6" y="0.6" width="12.2" height="10.6" rx="1" fill="none" stroke="#444" stroke-width="1"/><rect x="3.4" y="2.8" width="6.6" height="6.4" fill="none" stroke="#444" stroke-width="0.9"/><path d="M4.8 4.6 H8.6 M4.8 6 H8.6 M4.8 7.4 H8.6" stroke="#444" stroke-width="0.7"/></svg>
<svg class="b" style="left:1251.6px;top:752.4px;" width="13.5" height="12" viewBox="0 0 13.5 12"><rect x="0.6" y="0.6" width="12.2" height="10.6" fill="none" stroke="#444" stroke-width="1"/><path d="M0.6 6.4 H12.8 M4.4 0.6 V6.4 M8 0.6 V6.4" stroke="#444" stroke-width="1"/></svg>
<div class="b" style="left:1282.4px;top:757.6px;width:6.6px;height:1px;background:#444;"></div>
<div class="b" style="left:1294.4px;top:757.6px;width:93.6px;height:1px;background:#8a8a8a;"></div>
<div class="b" style="left:1340px;top:753px;width:3.6px;height:10px;background:#555;"></div>
<svg class="b" style="left:1393px;top:754.6px;" width="7" height="7" viewBox="0 0 7 7"><path d="M3.5 0 V7 M0 3.5 H7" stroke="#444" stroke-width="1"/></svg>
<span class="t " style="left:1412.50px;top:751.70px;font-size:11px;line-height:15px;transform-origin:0 50%;transform:scaleX(0.8531);color:#333;">100%</span>
</body></html>
